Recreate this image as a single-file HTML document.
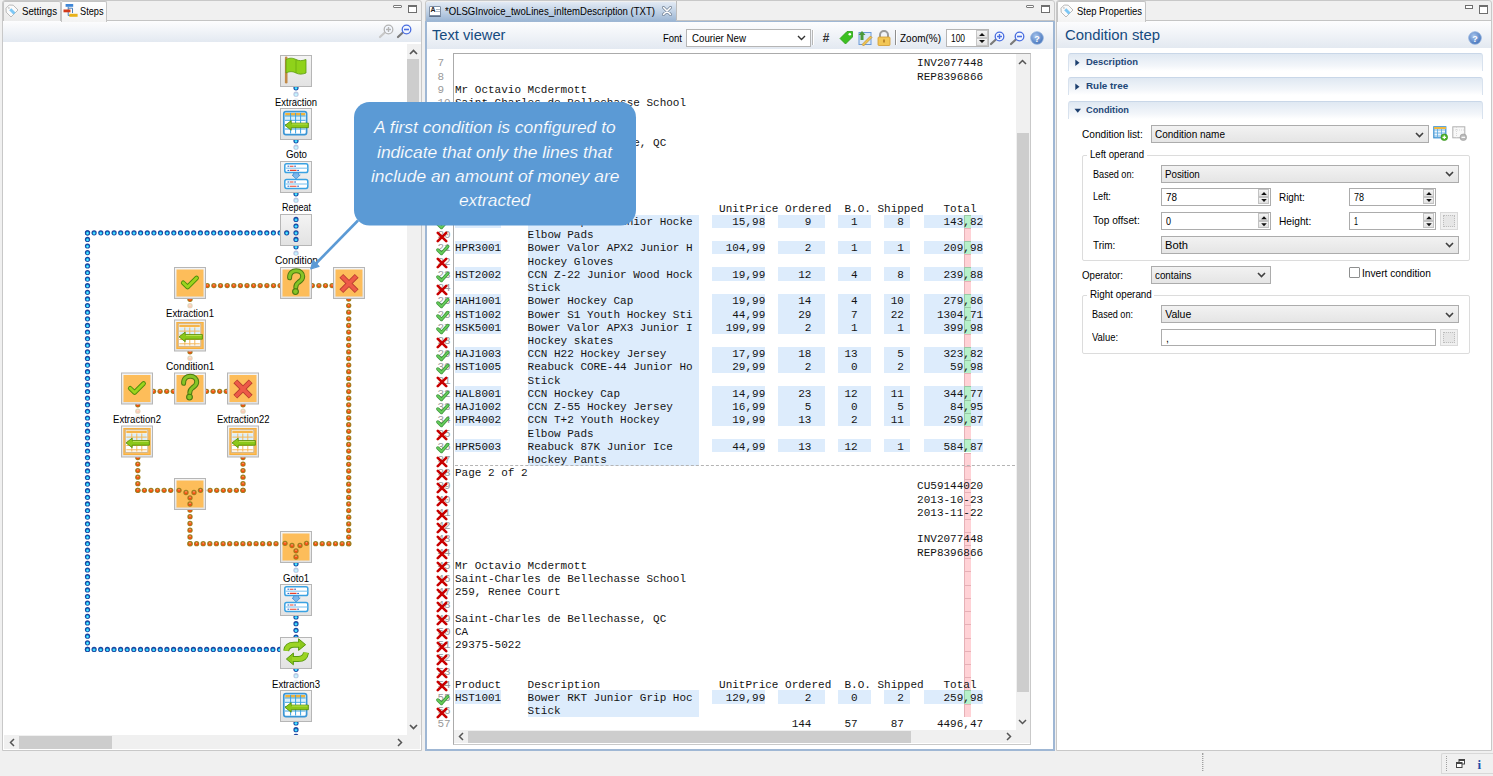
<!DOCTYPE html><html><head><meta charset="utf-8"><title>OLSG</title><style>
*{box-sizing:border-box;margin:0;padding:0}
html,body{width:1493px;height:776px;overflow:hidden;background:#f0f0f0;font-family:"Liberation Sans",sans-serif;font-size:12px;color:#000}
.a{position:absolute}
.tb{background:linear-gradient(#fdfdfe,#e3e9f1)}
.mono{font-family:"Liberation Mono",monospace;font-size:11px;white-space:pre;color:#141414}
</style></head><body>
<div class="a" style="left:2px;top:0;width:420px;height:751px;border:1px solid #c8c8c8;border-radius:3px 3px 0 0;background:#f0f0f0"></div>
<div class="a tb" style="left:3px;top:20px;width:418px;height:22px;border-top:1px solid #c4c4c4"></div>
<div class="a" style="left:3px;top:42px;width:418px;height:708px;background:#fff"></div>
<div class="a" style="left:3px;top:1px;width:58px;height:20px;background:linear-gradient(#f6f6f6,#ebebeb);border:1px solid #c4c4c4;border-bottom:none;border-radius:2px 2px 0 0"></div>
<div class="a" style="left:61px;top:1px;width:46px;height:21px;background:linear-gradient(#ffffff,#f3f3f3);border:1px solid #c4c4c4;border-bottom:none;border-radius:2px 2px 0 0"></div>
<svg class="a" style="left:5px;top:4px" width="14" height="14" viewBox="0 0 14 14"><path d="M1 4.2 L4.2 1 L8.2 1.2 L13 6 L6 13 L1.2 8.2 Z" fill="#fafafa" stroke="#b9b9b9" stroke-width="1"/><path d="M5 5.5 L6.3 4.2 L10.5 8.4 L8.4 10.5 L4.2 6.3Z" fill="#7cc7f5"/><circle cx="3.9" cy="3.9" r="0.9" fill="#c8c8c8"/></svg>
<div class="a" style="left:22.20px;top:5.91px;font-family:'Liberation Sans',sans-serif;font-size:10.50px;line-height:10.50px;color:#000;white-space:pre;transform:scaleX(0.9225);transform-origin:0 0;">Settings</div>
<svg class="a" style="left:63px;top:3px" width="15" height="15" viewBox="0 0 15 15"><rect x="2.6" y="1" width="7.6" height="2.8" fill="#3f86d6"/><path d="M5.2 3.8 V12.5 H9 M5.2 5.2 H9.5 V10" fill="none" stroke="#4d80b8" stroke-width="1"/><rect x="0.5" y="6.5" width="7" height="2.8" fill="#d23a1a"/><rect x="6.3" y="10.8" width="8.3" height="3" fill="#e8b21c"/></svg>
<div class="a" style="left:80.00px;top:5.91px;font-family:'Liberation Sans',sans-serif;font-size:10.50px;line-height:10.50px;color:#000;white-space:pre;transform:scaleX(0.8752);transform-origin:0 0;">Steps</div>
<div class="a" style="left:393.3px;top:5px;width:8.5px;height:3px;border:1px solid #7a7a7a;border-radius:1px;background:#fff"></div><div class="a" style="left:408.1px;top:5px;width:9px;height:8px;border:1px solid #6e6e6e;border-top-width:2px;background:#fff"></div>
<svg class="a" style="left:377.5px;top:23.9px" width="16" height="16" viewBox="0 0 16 16"><path d="M2 13 L6.3 9" stroke="#c8c8c8" stroke-width="2.2" stroke-linecap="round"/><circle cx="10.5" cy="5.5" r="4.3" fill="#f4f8ff" stroke="#b4b4b4" stroke-width="1.3"/><path d="M8 5.5h5M10.5 3v5" stroke="#b4b4b4" stroke-width="1.4"/></svg>
<svg class="a" style="left:396.2px;top:23.9px" width="16" height="16" viewBox="0 0 16 16"><path d="M2 13 L6.3 9" stroke="#7a7a7a" stroke-width="2.2" stroke-linecap="round"/><circle cx="10.5" cy="5.5" r="4.3" fill="#f4f8ff" stroke="#4a6ee0" stroke-width="1.3"/><path d="M8 5.5h5" stroke="#4a6ee0" stroke-width="1.6"/></svg>
<div class="a" style="left:406.5px;top:44px;width:14px;height:691px;background:#f0f0f0"></div>
<div class="a" style="left:407px;top:59px;width:12px;height:160px;background:#cdcdcd"></div>
<svg class="a" style="left:408.5px;top:49px" width="9" height="6" viewBox="0 0 9 6"><path d="M1 5L4.5 1.5L8 5" fill="none" stroke="#555" stroke-width="1.7"/></svg>
<svg class="a" style="left:408.5px;top:724px" width="9" height="6" viewBox="0 0 9 6"><path d="M1 1L4.5 4.5L8 1" fill="none" stroke="#555" stroke-width="1.7"/></svg>
<div class="a" style="left:4px;top:735px;width:416px;height:14px;background:#f0f0f0"></div>
<div class="a" style="left:19px;top:735.5px;width:93px;height:13px;background:#cdcdcd"></div>
<svg class="a" style="left:9px;top:737.5px" width="6" height="9" viewBox="0 0 6 9"><path d="M5 1L1.5 4.5L5 8" fill="none" stroke="#555" stroke-width="1.5"/></svg>
<svg class="a" style="left:397px;top:737.5px" width="6" height="9" viewBox="0 0 6 9"><path d="M1 1L4.5 4.5L1 8" fill="none" stroke="#555" stroke-width="1.5"/></svg>
<svg class="a" style="left:0;top:0" width="407" height="735" viewBox="0 0 407 735"><defs><radialGradient id="bdg" cx="50%" cy="55%" r="50%"><stop offset="0" stop-color="#50eaff"/><stop offset="0.45" stop-color="#1aa8ec"/><stop offset="0.72" stop-color="#1a4aa8"/><stop offset="0.9" stop-color="#183c96"/><stop offset="1" stop-color="#6080c0"/></radialGradient><radialGradient id="odg" cx="50%" cy="55%" r="50%"><stop offset="0" stop-color="#ff7a3a"/><stop offset="0.5" stop-color="#f8460c"/><stop offset="0.68" stop-color="#c85010"/><stop offset="0.82" stop-color="#8a7618"/><stop offset="1" stop-color="#b0a050"/></radialGradient><symbol id="bd" overflow="visible"><circle cx="0" cy="0" r="2.6" fill="#1d449e"/><circle cx="0" cy="0.3" r="1.55" fill="#1fc0f6"/><circle cx="0" cy="0.6" r="0.8" fill="#6af0ff"/></symbol><symbol id="od" overflow="visible"><circle cx="0" cy="0" r="2.65" fill="#9a8222"/><circle cx="0" cy="0.2" r="1.7" fill="#f4500e"/><circle cx="0" cy="-0.6" r="0.8" fill="#ff9a70"/></symbol><clipPath id="dclip"><rect x="3" y="42" width="404" height="693"/></clipPath></defs><g clip-path="url(#dclip)"><use href="#bd" x="296.0" y="87.8"/><use href="#bd" x="296.0" y="94.2" opacity="0.3"/><use href="#bd" x="296.0" y="100.8" opacity="0.1"/><use href="#bd" x="296.0" y="140.8"/><use href="#bd" x="296.0" y="147.2" opacity="0.3"/><use href="#bd" x="296.0" y="153.8" opacity="0.1"/><use href="#bd" x="296.0" y="193.8"/><use href="#bd" x="296.0" y="200.2" opacity="0.3"/><use href="#bd" x="296.0" y="206.8" opacity="0.1"/><use href="#bd" x="296.0" y="246.8"/><use href="#bd" x="296.0" y="253.2" opacity="0.3"/><use href="#bd" x="296.0" y="259.8" opacity="0.1"/><use href="#bd" x="87.5" y="232.8"/><use href="#bd" x="94.1" y="232.8"/><use href="#bd" x="100.8" y="232.8"/><use href="#bd" x="107.4" y="232.8"/><use href="#bd" x="114.1" y="232.8"/><use href="#bd" x="120.7" y="232.8"/><use href="#bd" x="127.3" y="232.8"/><use href="#bd" x="134.0" y="232.8"/><use href="#bd" x="140.6" y="232.8"/><use href="#bd" x="147.3" y="232.8"/><use href="#bd" x="153.9" y="232.8"/><use href="#bd" x="160.5" y="232.8"/><use href="#bd" x="167.2" y="232.8"/><use href="#bd" x="173.8" y="232.8"/><use href="#bd" x="180.5" y="232.8"/><use href="#bd" x="187.1" y="232.8"/><use href="#bd" x="193.7" y="232.8"/><use href="#bd" x="200.4" y="232.8"/><use href="#bd" x="207.0" y="232.8"/><use href="#bd" x="213.7" y="232.8"/><use href="#bd" x="220.3" y="232.8"/><use href="#bd" x="226.9" y="232.8"/><use href="#bd" x="233.6" y="232.8"/><use href="#bd" x="240.2" y="232.8"/><use href="#bd" x="246.9" y="232.8"/><use href="#bd" x="253.5" y="232.8"/><use href="#bd" x="260.1" y="232.8"/><use href="#bd" x="266.8" y="232.8"/><use href="#bd" x="273.4" y="232.8"/><use href="#bd" x="280.1" y="232.8"/><use href="#bd" x="286.7" y="232.8"/><use href="#bd" x="87.5" y="232.8"/><use href="#bd" x="87.5" y="239.4"/><use href="#bd" x="87.5" y="246.0"/><use href="#bd" x="87.5" y="252.6"/><use href="#bd" x="87.5" y="259.3"/><use href="#bd" x="87.5" y="265.9"/><use href="#bd" x="87.5" y="272.5"/><use href="#bd" x="87.5" y="279.1"/><use href="#bd" x="87.5" y="285.7"/><use href="#bd" x="87.5" y="292.3"/><use href="#bd" x="87.5" y="298.9"/><use href="#bd" x="87.5" y="305.5"/><use href="#bd" x="87.5" y="312.2"/><use href="#bd" x="87.5" y="318.8"/><use href="#bd" x="87.5" y="325.4"/><use href="#bd" x="87.5" y="332.0"/><use href="#bd" x="87.5" y="338.6"/><use href="#bd" x="87.5" y="345.2"/><use href="#bd" x="87.5" y="351.8"/><use href="#bd" x="87.5" y="358.4"/><use href="#bd" x="87.5" y="365.1"/><use href="#bd" x="87.5" y="371.7"/><use href="#bd" x="87.5" y="378.3"/><use href="#bd" x="87.5" y="384.9"/><use href="#bd" x="87.5" y="391.5"/><use href="#bd" x="87.5" y="398.1"/><use href="#bd" x="87.5" y="404.7"/><use href="#bd" x="87.5" y="411.3"/><use href="#bd" x="87.5" y="418.0"/><use href="#bd" x="87.5" y="424.6"/><use href="#bd" x="87.5" y="431.2"/><use href="#bd" x="87.5" y="437.8"/><use href="#bd" x="87.5" y="444.4"/><use href="#bd" x="87.5" y="451.0"/><use href="#bd" x="87.5" y="457.6"/><use href="#bd" x="87.5" y="464.2"/><use href="#bd" x="87.5" y="470.9"/><use href="#bd" x="87.5" y="477.5"/><use href="#bd" x="87.5" y="484.1"/><use href="#bd" x="87.5" y="490.7"/><use href="#bd" x="87.5" y="497.3"/><use href="#bd" x="87.5" y="503.9"/><use href="#bd" x="87.5" y="510.5"/><use href="#bd" x="87.5" y="517.1"/><use href="#bd" x="87.5" y="523.8"/><use href="#bd" x="87.5" y="530.4"/><use href="#bd" x="87.5" y="537.0"/><use href="#bd" x="87.5" y="543.6"/><use href="#bd" x="87.5" y="550.2"/><use href="#bd" x="87.5" y="556.8"/><use href="#bd" x="87.5" y="563.4"/><use href="#bd" x="87.5" y="570.0"/><use href="#bd" x="87.5" y="576.7"/><use href="#bd" x="87.5" y="583.3"/><use href="#bd" x="87.5" y="589.9"/><use href="#bd" x="87.5" y="596.5"/><use href="#bd" x="87.5" y="603.1"/><use href="#bd" x="87.5" y="609.7"/><use href="#bd" x="87.5" y="616.3"/><use href="#bd" x="87.5" y="622.9"/><use href="#bd" x="87.5" y="629.6"/><use href="#bd" x="87.5" y="636.2"/><use href="#bd" x="87.5" y="642.8"/><use href="#bd" x="87.5" y="649.4"/><use href="#bd" x="87.5" y="649.4"/><use href="#bd" x="94.1" y="649.4"/><use href="#bd" x="100.7" y="649.4"/><use href="#bd" x="107.4" y="649.4"/><use href="#bd" x="114.0" y="649.4"/><use href="#bd" x="120.6" y="649.4"/><use href="#bd" x="127.2" y="649.4"/><use href="#bd" x="133.8" y="649.4"/><use href="#bd" x="140.5" y="649.4"/><use href="#bd" x="147.1" y="649.4"/><use href="#bd" x="153.7" y="649.4"/><use href="#bd" x="160.3" y="649.4"/><use href="#bd" x="166.9" y="649.4"/><use href="#bd" x="173.6" y="649.4"/><use href="#bd" x="180.2" y="649.4"/><use href="#bd" x="186.8" y="649.4"/><use href="#bd" x="193.4" y="649.4"/><use href="#bd" x="200.1" y="649.4"/><use href="#bd" x="206.7" y="649.4"/><use href="#bd" x="213.3" y="649.4"/><use href="#bd" x="219.9" y="649.4"/><use href="#bd" x="226.5" y="649.4"/><use href="#bd" x="233.2" y="649.4"/><use href="#bd" x="239.8" y="649.4"/><use href="#bd" x="246.4" y="649.4"/><use href="#bd" x="253.0" y="649.4"/><use href="#bd" x="259.6" y="649.4"/><use href="#bd" x="266.3" y="649.4"/><use href="#bd" x="272.9" y="649.4"/><use href="#bd" x="279.5" y="649.4"/><use href="#bd" x="296.0" y="563.8"/><use href="#bd" x="296.0" y="570.2" opacity="0.3"/><use href="#bd" x="296.0" y="576.8" opacity="0.1"/><use href="#bd" x="296.0" y="617.0"/><use href="#bd" x="296.0" y="623.7"/><use href="#bd" x="296.0" y="630.3"/><use href="#bd" x="296.0" y="637.0"/><use href="#bd" x="296.0" y="669.3"/><use href="#bd" x="296.0" y="675.7" opacity="0.3"/><use href="#bd" x="296.0" y="682.3" opacity="0.1"/><use href="#bd" x="296.0" y="723.0"/><use href="#bd" x="296.0" y="729.7"/><use href="#bd" x="296.0" y="736.3"/><use href="#bd" x="296.0" y="743.0"/><use href="#od" x="207.3" y="285.6"/><use href="#od" x="213.9" y="285.6"/><use href="#od" x="220.5" y="285.6"/><use href="#od" x="227.2" y="285.6"/><use href="#od" x="233.8" y="285.6"/><use href="#od" x="240.4" y="285.6"/><use href="#od" x="247.0" y="285.6"/><use href="#od" x="253.6" y="285.6"/><use href="#od" x="260.2" y="285.6"/><use href="#od" x="266.9" y="285.6"/><use href="#od" x="273.5" y="285.6"/><use href="#od" x="280.1" y="285.6"/><use href="#od" x="312.3" y="285.6"/><use href="#od" x="318.9" y="285.6"/><use href="#od" x="325.5" y="285.6"/><use href="#od" x="332.1" y="285.6"/><use href="#od" x="190.0" y="299.3"/><use href="#od" x="190.0" y="305.7" opacity="0.3"/><use href="#od" x="190.0" y="312.3" opacity="0.1"/><use href="#od" x="190.0" y="351.8"/><use href="#od" x="190.0" y="358.2" opacity="0.3"/><use href="#od" x="190.0" y="364.8" opacity="0.1"/><use href="#od" x="153.5" y="391.3"/><use href="#od" x="160.1" y="391.3"/><use href="#od" x="166.7" y="391.3"/><use href="#od" x="173.3" y="391.3"/><use href="#od" x="206.5" y="391.3"/><use href="#od" x="213.1" y="391.3"/><use href="#od" x="219.7" y="391.3"/><use href="#od" x="226.3" y="391.3"/><use href="#od" x="137.8" y="404.8"/><use href="#od" x="137.8" y="411.2" opacity="0.3"/><use href="#od" x="137.8" y="417.8" opacity="0.1"/><use href="#od" x="243.0" y="404.8"/><use href="#od" x="243.0" y="411.2" opacity="0.3"/><use href="#od" x="243.0" y="417.8" opacity="0.1"/><use href="#od" x="137.8" y="457.5"/><use href="#od" x="137.8" y="464.1"/><use href="#od" x="137.8" y="470.6"/><use href="#od" x="137.8" y="477.2"/><use href="#od" x="137.8" y="483.7"/><use href="#od" x="137.8" y="490.3"/><use href="#od" x="243.0" y="457.5"/><use href="#od" x="243.0" y="464.1"/><use href="#od" x="243.0" y="470.6"/><use href="#od" x="243.0" y="477.2"/><use href="#od" x="243.0" y="483.7"/><use href="#od" x="243.0" y="490.3"/><use href="#od" x="137.8" y="490.3"/><use href="#od" x="144.4" y="490.3"/><use href="#od" x="151.0" y="490.3"/><use href="#od" x="157.5" y="490.3"/><use href="#od" x="164.1" y="490.3"/><use href="#od" x="170.7" y="490.3"/><use href="#od" x="177.2" y="490.3"/><use href="#od" x="183.8" y="490.3"/><use href="#od" x="190.4" y="490.3"/><use href="#od" x="197.0" y="490.3"/><use href="#od" x="203.6" y="490.3"/><use href="#od" x="210.1" y="490.3"/><use href="#od" x="216.7" y="490.3"/><use href="#od" x="223.3" y="490.3"/><use href="#od" x="229.8" y="490.3"/><use href="#od" x="236.4" y="490.3"/><use href="#od" x="243.0" y="490.3"/><use href="#od" x="190.0" y="510.0"/><use href="#od" x="190.0" y="516.7"/><use href="#od" x="190.0" y="523.5"/><use href="#od" x="190.0" y="530.2"/><use href="#od" x="190.0" y="537.0"/><use href="#od" x="190.0" y="543.7"/><use href="#od" x="190.0" y="543.7"/><use href="#od" x="196.6" y="543.7"/><use href="#od" x="203.2" y="543.7"/><use href="#od" x="209.8" y="543.7"/><use href="#od" x="216.4" y="543.7"/><use href="#od" x="223.1" y="543.7"/><use href="#od" x="229.7" y="543.7"/><use href="#od" x="236.3" y="543.7"/><use href="#od" x="242.9" y="543.7"/><use href="#od" x="249.5" y="543.7"/><use href="#od" x="256.1" y="543.7"/><use href="#od" x="262.7" y="543.7"/><use href="#od" x="269.4" y="543.7"/><use href="#od" x="276.0" y="543.7"/><use href="#od" x="282.6" y="543.7"/><use href="#od" x="289.2" y="543.7"/><use href="#od" x="295.8" y="543.7"/><use href="#od" x="302.4" y="543.7"/><use href="#od" x="309.0" y="543.7"/><use href="#od" x="315.6" y="543.7"/><use href="#od" x="322.2" y="543.7"/><use href="#od" x="328.9" y="543.7"/><use href="#od" x="335.5" y="543.7"/><use href="#od" x="342.1" y="543.7"/><use href="#od" x="348.7" y="543.7"/><use href="#od" x="348.7" y="299.0"/><use href="#od" x="348.7" y="305.6"/><use href="#od" x="348.7" y="312.2"/><use href="#od" x="348.7" y="318.8"/><use href="#od" x="348.7" y="325.5"/><use href="#od" x="348.7" y="332.1"/><use href="#od" x="348.7" y="338.7"/><use href="#od" x="348.7" y="345.3"/><use href="#od" x="348.7" y="351.9"/><use href="#od" x="348.7" y="358.5"/><use href="#od" x="348.7" y="365.1"/><use href="#od" x="348.7" y="371.7"/><use href="#od" x="348.7" y="378.4"/><use href="#od" x="348.7" y="385.0"/><use href="#od" x="348.7" y="391.6"/><use href="#od" x="348.7" y="398.2"/><use href="#od" x="348.7" y="404.8"/><use href="#od" x="348.7" y="411.4"/><use href="#od" x="348.7" y="418.0"/><use href="#od" x="348.7" y="424.7"/><use href="#od" x="348.7" y="431.3"/><use href="#od" x="348.7" y="437.9"/><use href="#od" x="348.7" y="444.5"/><use href="#od" x="348.7" y="451.1"/><use href="#od" x="348.7" y="457.7"/><use href="#od" x="348.7" y="464.3"/><use href="#od" x="348.7" y="471.0"/><use href="#od" x="348.7" y="477.6"/><use href="#od" x="348.7" y="484.2"/><use href="#od" x="348.7" y="490.8"/><use href="#od" x="348.7" y="497.4"/><use href="#od" x="348.7" y="504.0"/><use href="#od" x="348.7" y="510.6"/><use href="#od" x="348.7" y="517.2"/><use href="#od" x="348.7" y="523.9"/><use href="#od" x="348.7" y="530.5"/><use href="#od" x="348.7" y="537.1"/><use href="#od" x="348.7" y="543.7"/><defs><linearGradient id="gbg" x1="0" y1="0" x2="0" y2="1"><stop offset="0" stop-color="#f4f4f4"/><stop offset="1" stop-color="#e2e2e2"/></linearGradient></defs><rect x="280.5" y="55.5" width="31" height="31" fill="url(#gbg)" stroke="#b6b6b6" stroke-width="1"/><g transform="translate(280.0 55.0)"><path d="M6.2 2.8 V27.3" stroke="#c28a48" stroke-width="2.6" stroke-linecap="round"/><path d="M6 4.5 C10 2.5 13 3 16 4.5 C19 6 22 6 26 4.5 V18 C22 19.5 19 19.5 16 18 C13 16.5 10 16 6 18 Z" fill="#8fd21a" stroke="#5c9a10" stroke-width="0.8"/><path d="M16 4.5 V18" stroke="#6aaa10" stroke-width="0.8"/></g><rect x="280.5" y="108.5" width="31" height="31" fill="url(#gbg)" stroke="#b6b6b6" stroke-width="1"/><g transform="translate(280.0 108.0)"><rect x="3.8" y="3.6" width="22.8" height="23" rx="2.2" fill="#fff" stroke="#3b96d6" stroke-width="1.7"/><rect x="5.2" y="5" width="20" height="2.6" fill="#f2b33a"/><rect x="5.2" y="8.4" width="20" height="3.2" fill="#d8f0fc"/><path d="M5 8H25.5 M5 12.3H25.5 M5 16.6H25.5 M5 21H25.5 M10.6 5V25.5 M15.6 5V25.5 M20.6 5V25.5" stroke="#3aa2e2" stroke-width="1"/><path d="M5 17.4 L11.2 12.6 V15.1 H28.4 V19.7 H11.2 V22.2 Z" fill="#8cc81a" stroke="#4f8a06" stroke-width="0.8" stroke-linejoin="round"/><path d="M12 16 H27.5" stroke="#b8e050" stroke-width="1"/></g><rect x="280.5" y="161.5" width="31" height="31" fill="url(#gbg)" stroke="#b6b6b6" stroke-width="1"/><g transform="translate(280.0 161.0)"><rect x="4.8" y="2.8" width="23" height="8.8" rx="1.8" fill="#fff" stroke="#3aa2e2" stroke-width="1.5"/><path d="M5 7.2H27.5" stroke="#8ccaf0" stroke-width="1.2"/><path d="M7.5 5.2H9.3 M14.2 5.2H16 M7.5 9.4H9.3 M17.2 9.4H19" stroke="#2a5cc0" stroke-width="1"/><path d="M10 5.2H13.5 M10 9.4H16.5" stroke="#e8402a" stroke-width="1.1"/><path d="M13.6 11.8 H18.6 V14 H20.2 L16.1 18 L12 14 H13.6 Z" fill="#7cb8ec" stroke="#3a88d0" stroke-width="0.7"/><rect x="4.8" y="18.6" width="23" height="8.8" rx="1.8" fill="#fff" stroke="#3aa2e2" stroke-width="1.5"/><path d="M5 23H27.5" stroke="#8ccaf0" stroke-width="1.2"/><path d="M7.5 21H9.3 M14.2 21H16 M7.5 25.2H9.3 M17.2 25.2H19" stroke="#2a5cc0" stroke-width="1"/><path d="M10 21H13.5 M10 25.2H16.5" stroke="#e8402a" stroke-width="1.1"/></g><rect x="280.5" y="214.5" width="31" height="31" fill="url(#gbg)" stroke="#b6b6b6" stroke-width="1"/><g transform="translate(280.0 214.0)"><use href="#bd" x="16" y="5.4"/><use href="#bd" x="16" y="12.0"/><use href="#bd" x="16" y="18.8"/><use href="#bd" x="16" y="25.4"/><use href="#bd" x="6.7" y="18.8"/></g><rect x="280.5" y="267.5" width="31" height="31" fill="url(#gbg)" stroke="#b6b6b6" stroke-width="1"/><rect x="282.5" y="269.5" width="27" height="27" fill="#fdbd5a"/><g transform="translate(280.0 267.0)"><path d="M9.6 10.8 C9.4 5.6 12.8 3.8 16.2 3.8 C20.4 3.8 22.7 6.4 22.7 9.4 C22.7 12.6 20.2 14 18.4 15.4 C16.6 16.8 15.8 17.8 15.8 20.2" fill="none" stroke="#4c7a12" stroke-width="5" stroke-linecap="round"/><path d="M9.6 10.8 C9.4 5.6 12.8 3.8 16.2 3.8 C20.4 3.8 22.7 6.4 22.7 9.4 C22.7 12.6 20.2 14 18.4 15.4 C16.6 16.8 15.8 17.8 15.8 20.2" fill="none" stroke="#86c426" stroke-width="3" stroke-linecap="round"/><circle cx="15.5" cy="24.6" r="2.9" fill="#86c426" stroke="#4c7a12" stroke-width="1.1"/></g><rect x="174.5" y="267.5" width="31" height="31" fill="url(#gbg)" stroke="#b6b6b6" stroke-width="1"/><rect x="176.5" y="269.5" width="27" height="27" fill="#fdbd5a"/><g transform="translate(174.0 267.0)"><path d="M9.2 15.8 L13.6 20 L22.6 11" fill="none" stroke="#4e8e0a" stroke-width="4.6" stroke-linejoin="round" stroke-linecap="round"/><path d="M9.2 15.8 L13.6 20 L22.6 11" fill="none" stroke="#9cd41e" stroke-width="2.8" stroke-linejoin="round" stroke-linecap="round"/></g><rect x="333.5" y="267.5" width="31" height="31" fill="url(#gbg)" stroke="#b6b6b6" stroke-width="1"/><rect x="335.5" y="269.5" width="27" height="27" fill="#fdbd5a"/><g transform="translate(333.0 267.0)"><path d="M8.3 8.8 L23.7 24.2 M23.7 8.8 L8.3 24.2" stroke="#b84030" stroke-width="5.4"/><path d="M8.8 9.3 L23.2 23.7 M23.2 9.3 L8.8 23.7" stroke="#ee5a48" stroke-width="3.6"/></g><rect x="174.5" y="320.0" width="31" height="31" fill="url(#gbg)" stroke="#b6b6b6" stroke-width="1"/><rect x="176.5" y="322.0" width="27" height="27" fill="#fdbd5a"/><g transform="translate(174.0 319.5)"><rect x="3" y="3" width="26" height="26" fill="none" stroke="#f6b040" stroke-width="1"/><rect x="4.3" y="4.3" width="22.5" height="22.5" fill="#fff" stroke="#c9b18c" stroke-width="0.9"/><rect x="5.3" y="5.3" width="20.5" height="2.4" fill="#f6b548"/><rect x="5.3" y="8.2" width="20.5" height="7" fill="#d9effb"/><path d="M5.3 11.6H25.8 M5.3 15.6H25.8 M5.3 20H25.8 M5.3 24.3H25.8 M10.8 8V26 M15.8 8V26 M20.8 8V26" stroke="#f6b758" stroke-width="1"/><path d="M5 17.4 L11.2 12.6 V15.1 H28.4 V19.7 H11.2 V22.2 Z" fill="#8cc81a" stroke="#4f8a06" stroke-width="0.8" stroke-linejoin="round"/><path d="M12 16 H27.5" stroke="#b8e050" stroke-width="1"/></g><rect x="174.5" y="373.0" width="31" height="31" fill="url(#gbg)" stroke="#b6b6b6" stroke-width="1"/><rect x="176.5" y="375.0" width="27" height="27" fill="#fdbd5a"/><g transform="translate(174.0 372.5)"><path d="M9.6 10.8 C9.4 5.6 12.8 3.8 16.2 3.8 C20.4 3.8 22.7 6.4 22.7 9.4 C22.7 12.6 20.2 14 18.4 15.4 C16.6 16.8 15.8 17.8 15.8 20.2" fill="none" stroke="#4c7a12" stroke-width="5" stroke-linecap="round"/><path d="M9.6 10.8 C9.4 5.6 12.8 3.8 16.2 3.8 C20.4 3.8 22.7 6.4 22.7 9.4 C22.7 12.6 20.2 14 18.4 15.4 C16.6 16.8 15.8 17.8 15.8 20.2" fill="none" stroke="#86c426" stroke-width="3" stroke-linecap="round"/><circle cx="15.5" cy="24.6" r="2.9" fill="#86c426" stroke="#4c7a12" stroke-width="1.1"/></g><rect x="121.5" y="373.0" width="31" height="31" fill="url(#gbg)" stroke="#b6b6b6" stroke-width="1"/><rect x="123.5" y="375.0" width="27" height="27" fill="#fdbd5a"/><g transform="translate(121.0 372.5)"><path d="M9.2 15.8 L13.6 20 L22.6 11" fill="none" stroke="#4e8e0a" stroke-width="4.6" stroke-linejoin="round" stroke-linecap="round"/><path d="M9.2 15.8 L13.6 20 L22.6 11" fill="none" stroke="#9cd41e" stroke-width="2.8" stroke-linejoin="round" stroke-linecap="round"/></g><rect x="227.5" y="373.0" width="31" height="31" fill="url(#gbg)" stroke="#b6b6b6" stroke-width="1"/><rect x="229.5" y="375.0" width="27" height="27" fill="#fdbd5a"/><g transform="translate(227.0 372.5)"><path d="M8.3 8.8 L23.7 24.2 M23.7 8.8 L8.3 24.2" stroke="#b84030" stroke-width="5.4"/><path d="M8.8 9.3 L23.2 23.7 M23.2 9.3 L8.8 23.7" stroke="#ee5a48" stroke-width="3.6"/></g><rect x="121.5" y="426.0" width="31" height="31" fill="url(#gbg)" stroke="#b6b6b6" stroke-width="1"/><rect x="123.5" y="428.0" width="27" height="27" fill="#fdbd5a"/><g transform="translate(121.0 425.5)"><rect x="3" y="3" width="26" height="26" fill="none" stroke="#f6b040" stroke-width="1"/><rect x="4.3" y="4.3" width="22.5" height="22.5" fill="#fff" stroke="#c9b18c" stroke-width="0.9"/><rect x="5.3" y="5.3" width="20.5" height="2.4" fill="#f6b548"/><rect x="5.3" y="8.2" width="20.5" height="7" fill="#d9effb"/><path d="M5.3 11.6H25.8 M5.3 15.6H25.8 M5.3 20H25.8 M5.3 24.3H25.8 M10.8 8V26 M15.8 8V26 M20.8 8V26" stroke="#f6b758" stroke-width="1"/><path d="M5 17.4 L11.2 12.6 V15.1 H28.4 V19.7 H11.2 V22.2 Z" fill="#8cc81a" stroke="#4f8a06" stroke-width="0.8" stroke-linejoin="round"/><path d="M12 16 H27.5" stroke="#b8e050" stroke-width="1"/></g><rect x="227.5" y="426.0" width="31" height="31" fill="url(#gbg)" stroke="#b6b6b6" stroke-width="1"/><rect x="229.5" y="428.0" width="27" height="27" fill="#fdbd5a"/><g transform="translate(227.0 425.5)"><rect x="3" y="3" width="26" height="26" fill="none" stroke="#f6b040" stroke-width="1"/><rect x="4.3" y="4.3" width="22.5" height="22.5" fill="#fff" stroke="#c9b18c" stroke-width="0.9"/><rect x="5.3" y="5.3" width="20.5" height="2.4" fill="#f6b548"/><rect x="5.3" y="8.2" width="20.5" height="7" fill="#d9effb"/><path d="M5.3 11.6H25.8 M5.3 15.6H25.8 M5.3 20H25.8 M5.3 24.3H25.8 M10.8 8V26 M15.8 8V26 M20.8 8V26" stroke="#f6b758" stroke-width="1"/><path d="M5 17.4 L11.2 12.6 V15.1 H28.4 V19.7 H11.2 V22.2 Z" fill="#8cc81a" stroke="#4f8a06" stroke-width="0.8" stroke-linejoin="round"/><path d="M12 16 H27.5" stroke="#b8e050" stroke-width="1"/></g><rect x="174.5" y="478.5" width="31" height="31" fill="url(#gbg)" stroke="#b6b6b6" stroke-width="1"/><rect x="176.5" y="480.5" width="27" height="27" fill="#fdbd5a"/><g transform="translate(174.0 478.0)"><use href="#od" x="5.0" y="12.3"/><use href="#od" x="12.0" y="14.5"/><use href="#od" x="20.0" y="14.5"/><use href="#od" x="26.5" y="12.3"/><use href="#od" x="16.0" y="19.8"/><use href="#od" x="16.0" y="26.0"/></g><rect x="280.5" y="531.5" width="31" height="31" fill="url(#gbg)" stroke="#b6b6b6" stroke-width="1"/><rect x="282.5" y="533.5" width="27" height="27" fill="#fdbd5a"/><g transform="translate(280.0 531.0)"><use href="#od" x="5.0" y="12.3"/><use href="#od" x="12.0" y="14.5"/><use href="#od" x="20.0" y="14.5"/><use href="#od" x="26.5" y="12.3"/><use href="#od" x="16.0" y="19.8"/><use href="#od" x="16.0" y="26.0"/></g><rect x="280.5" y="584.5" width="31" height="31" fill="url(#gbg)" stroke="#b6b6b6" stroke-width="1"/><g transform="translate(280.0 584.0)"><rect x="4.8" y="2.8" width="23" height="8.8" rx="1.8" fill="#fff" stroke="#3aa2e2" stroke-width="1.5"/><path d="M5 7.2H27.5" stroke="#8ccaf0" stroke-width="1.2"/><path d="M7.5 5.2H9.3 M14.2 5.2H16 M7.5 9.4H9.3 M17.2 9.4H19" stroke="#2a5cc0" stroke-width="1"/><path d="M10 5.2H13.5 M10 9.4H16.5" stroke="#e8402a" stroke-width="1.1"/><path d="M13.6 11.8 H18.6 V14 H20.2 L16.1 18 L12 14 H13.6 Z" fill="#7cb8ec" stroke="#3a88d0" stroke-width="0.7"/><rect x="4.8" y="18.6" width="23" height="8.8" rx="1.8" fill="#fff" stroke="#3aa2e2" stroke-width="1.5"/><path d="M5 23H27.5" stroke="#8ccaf0" stroke-width="1.2"/><path d="M7.5 21H9.3 M14.2 21H16 M7.5 25.2H9.3 M17.2 25.2H19" stroke="#2a5cc0" stroke-width="1"/><path d="M10 21H13.5 M10 25.2H16.5" stroke="#e8402a" stroke-width="1.1"/></g><rect x="280.5" y="637.5" width="31" height="31" fill="url(#gbg)" stroke="#b6b6b6" stroke-width="1"/><g transform="translate(280.0 637.0)"><path d="M6.2 13.8 C6.8 9.5 10 7.7 14 7.7 H19.5" fill="none" stroke="#5a9a10" stroke-width="6"/><path d="M18.6 1.8 L25.6 7.7 L18.6 13.4 Z" fill="#8cc81a" stroke="#5a9a10" stroke-width="1" stroke-linejoin="round"/><path d="M6.2 13.8 C6.8 9.5 10 7.7 14 7.7 H20" fill="none" stroke="#9cd424" stroke-width="4.2"/><path d="M26 15.6 C25.4 20 22.2 22 18.2 22 H12.5" fill="none" stroke="#5a9a10" stroke-width="6"/><path d="M13.4 16 L6.4 22 L13.4 27.8 Z" fill="#8cc81a" stroke="#5a9a10" stroke-width="1" stroke-linejoin="round"/><path d="M26 15.6 C25.4 20 22.2 22 18.2 22 H12" fill="none" stroke="#9cd424" stroke-width="4.2"/></g><rect x="280.5" y="690.5" width="31" height="31" fill="url(#gbg)" stroke="#b6b6b6" stroke-width="1"/><g transform="translate(280.0 690.0)"><rect x="3.8" y="3.6" width="22.8" height="23" rx="2.2" fill="#fff" stroke="#3b96d6" stroke-width="1.7"/><rect x="5.2" y="5" width="20" height="2.6" fill="#f2b33a"/><rect x="5.2" y="8.4" width="20" height="3.2" fill="#d8f0fc"/><path d="M5 8H25.5 M5 12.3H25.5 M5 16.6H25.5 M5 21H25.5 M10.6 5V25.5 M15.6 5V25.5 M20.6 5V25.5" stroke="#3aa2e2" stroke-width="1"/><path d="M5 17.4 L11.2 12.6 V15.1 H28.4 V19.7 H11.2 V22.2 Z" fill="#8cc81a" stroke="#4f8a06" stroke-width="0.8" stroke-linejoin="round"/><path d="M12 16 H27.5" stroke="#b8e050" stroke-width="1"/></g></g></svg>
<div class="a" style="left:275.00px;top:97.31px;font-family:'Liberation Sans',sans-serif;font-size:10.50px;line-height:10.50px;color:#000;white-space:pre;transform:scaleX(0.8996);transform-origin:0 0;">Extraction</div>
<div class="a" style="left:285.50px;top:149.21px;font-family:'Liberation Sans',sans-serif;font-size:10.50px;line-height:10.50px;color:#000;white-space:pre;transform:scaleX(0.9225);transform-origin:0 0;">Goto</div>
<div class="a" style="left:281.50px;top:202.01px;font-family:'Liberation Sans',sans-serif;font-size:10.50px;line-height:10.50px;color:#000;white-space:pre;transform:scaleX(0.8565);transform-origin:0 0;">Repeat</div>
<div class="a" style="left:274.50px;top:255.01px;font-family:'Liberation Sans',sans-serif;font-size:10.50px;line-height:10.50px;color:#000;white-space:pre;transform:scaleX(0.9693);transform-origin:0 0;">Condition</div>
<div class="a" style="left:166.00px;top:308.41px;font-family:'Liberation Sans',sans-serif;font-size:10.50px;line-height:10.50px;color:#000;white-space:pre;transform:scaleX(0.9138);transform-origin:0 0;">Extraction1</div>
<div class="a" style="left:165.80px;top:360.91px;font-family:'Liberation Sans',sans-serif;font-size:10.50px;line-height:10.50px;color:#000;white-space:pre;transform:scaleX(0.9641);transform-origin:0 0;">Condition1</div>
<div class="a" style="left:113.00px;top:413.51px;font-family:'Liberation Sans',sans-serif;font-size:10.50px;line-height:10.50px;color:#000;white-space:pre;transform:scaleX(0.9138);transform-origin:0 0;">Extraction2</div>
<div class="a" style="left:216.70px;top:413.51px;font-family:'Liberation Sans',sans-serif;font-size:10.50px;line-height:10.50px;color:#000;white-space:pre;transform:scaleX(0.9012);transform-origin:0 0;">Extraction22</div>
<div class="a" style="left:283.00px;top:572.61px;font-family:'Liberation Sans',sans-serif;font-size:10.50px;line-height:10.50px;color:#000;white-space:pre;transform:scaleX(0.9090);transform-origin:0 0;">Goto1</div>
<div class="a" style="left:272.00px;top:678.61px;font-family:'Liberation Sans',sans-serif;font-size:10.50px;line-height:10.50px;color:#000;white-space:pre;transform:scaleX(0.9138);transform-origin:0 0;">Extraction3</div>
<div class="a" style="left:425px;top:0;width:630px;height:751px;border:1px solid #c8c8c8;border-radius:3px 3px 0 0;background:#f0f0f0"></div>
<div class="a" style="left:425px;top:21px;width:630px;height:730px;border:2px solid #9fb7d4;border-top:1px solid #9fb7d4;background:#fff"></div>
<div class="a tb" style="left:427px;top:22px;width:626px;height:26.5px"></div>
<div class="a" style="left:453px;top:53px;width:578px;height:692px;border:1px solid #ababab;border-right-color:#c9c9c9;border-bottom-color:#c9c9c9;background:#fff"></div>
<div class="a" style="left:455.00px;top:214.54px;width:46.20px;height:13.22px;background:#ddecfc"></div><div class="a" style="left:712.40px;top:214.54px;width:52.80px;height:13.22px;background:#ddecfc"></div><div class="a" style="left:778.40px;top:214.54px;width:46.20px;height:13.22px;background:#ddecfc"></div><div class="a" style="left:837.80px;top:214.54px;width:33.00px;height:13.22px;background:#ddecfc"></div><div class="a" style="left:884.00px;top:214.54px;width:26.40px;height:13.22px;background:#ddecfc"></div><div class="a" style="left:923.60px;top:214.54px;width:59.40px;height:13.22px;background:#ddecfc"></div><div class="a" style="left:455.00px;top:240.98px;width:46.20px;height:13.22px;background:#ddecfc"></div><div class="a" style="left:712.40px;top:240.98px;width:52.80px;height:13.22px;background:#ddecfc"></div><div class="a" style="left:778.40px;top:240.98px;width:46.20px;height:13.22px;background:#ddecfc"></div><div class="a" style="left:837.80px;top:240.98px;width:33.00px;height:13.22px;background:#ddecfc"></div><div class="a" style="left:884.00px;top:240.98px;width:26.40px;height:13.22px;background:#ddecfc"></div><div class="a" style="left:923.60px;top:240.98px;width:59.40px;height:13.22px;background:#ddecfc"></div><div class="a" style="left:455.00px;top:267.42px;width:46.20px;height:13.22px;background:#ddecfc"></div><div class="a" style="left:712.40px;top:267.42px;width:52.80px;height:13.22px;background:#ddecfc"></div><div class="a" style="left:778.40px;top:267.42px;width:46.20px;height:13.22px;background:#ddecfc"></div><div class="a" style="left:837.80px;top:267.42px;width:33.00px;height:13.22px;background:#ddecfc"></div><div class="a" style="left:884.00px;top:267.42px;width:26.40px;height:13.22px;background:#ddecfc"></div><div class="a" style="left:923.60px;top:267.42px;width:59.40px;height:13.22px;background:#ddecfc"></div><div class="a" style="left:455.00px;top:293.86px;width:46.20px;height:13.22px;background:#ddecfc"></div><div class="a" style="left:712.40px;top:293.86px;width:52.80px;height:13.22px;background:#ddecfc"></div><div class="a" style="left:778.40px;top:293.86px;width:46.20px;height:13.22px;background:#ddecfc"></div><div class="a" style="left:837.80px;top:293.86px;width:33.00px;height:13.22px;background:#ddecfc"></div><div class="a" style="left:884.00px;top:293.86px;width:26.40px;height:13.22px;background:#ddecfc"></div><div class="a" style="left:923.60px;top:293.86px;width:59.40px;height:13.22px;background:#ddecfc"></div><div class="a" style="left:455.00px;top:307.08px;width:46.20px;height:13.22px;background:#ddecfc"></div><div class="a" style="left:712.40px;top:307.08px;width:52.80px;height:13.22px;background:#ddecfc"></div><div class="a" style="left:778.40px;top:307.08px;width:46.20px;height:13.22px;background:#ddecfc"></div><div class="a" style="left:837.80px;top:307.08px;width:33.00px;height:13.22px;background:#ddecfc"></div><div class="a" style="left:884.00px;top:307.08px;width:26.40px;height:13.22px;background:#ddecfc"></div><div class="a" style="left:923.60px;top:307.08px;width:59.40px;height:13.22px;background:#ddecfc"></div><div class="a" style="left:455.00px;top:320.30px;width:46.20px;height:13.22px;background:#ddecfc"></div><div class="a" style="left:712.40px;top:320.30px;width:52.80px;height:13.22px;background:#ddecfc"></div><div class="a" style="left:778.40px;top:320.30px;width:46.20px;height:13.22px;background:#ddecfc"></div><div class="a" style="left:837.80px;top:320.30px;width:33.00px;height:13.22px;background:#ddecfc"></div><div class="a" style="left:884.00px;top:320.30px;width:26.40px;height:13.22px;background:#ddecfc"></div><div class="a" style="left:923.60px;top:320.30px;width:59.40px;height:13.22px;background:#ddecfc"></div><div class="a" style="left:455.00px;top:346.74px;width:46.20px;height:13.22px;background:#ddecfc"></div><div class="a" style="left:712.40px;top:346.74px;width:52.80px;height:13.22px;background:#ddecfc"></div><div class="a" style="left:778.40px;top:346.74px;width:46.20px;height:13.22px;background:#ddecfc"></div><div class="a" style="left:837.80px;top:346.74px;width:33.00px;height:13.22px;background:#ddecfc"></div><div class="a" style="left:884.00px;top:346.74px;width:26.40px;height:13.22px;background:#ddecfc"></div><div class="a" style="left:923.60px;top:346.74px;width:59.40px;height:13.22px;background:#ddecfc"></div><div class="a" style="left:455.00px;top:359.96px;width:46.20px;height:13.22px;background:#ddecfc"></div><div class="a" style="left:712.40px;top:359.96px;width:52.80px;height:13.22px;background:#ddecfc"></div><div class="a" style="left:778.40px;top:359.96px;width:46.20px;height:13.22px;background:#ddecfc"></div><div class="a" style="left:837.80px;top:359.96px;width:33.00px;height:13.22px;background:#ddecfc"></div><div class="a" style="left:884.00px;top:359.96px;width:26.40px;height:13.22px;background:#ddecfc"></div><div class="a" style="left:923.60px;top:359.96px;width:59.40px;height:13.22px;background:#ddecfc"></div><div class="a" style="left:455.00px;top:386.40px;width:46.20px;height:13.22px;background:#ddecfc"></div><div class="a" style="left:712.40px;top:386.40px;width:52.80px;height:13.22px;background:#ddecfc"></div><div class="a" style="left:778.40px;top:386.40px;width:46.20px;height:13.22px;background:#ddecfc"></div><div class="a" style="left:837.80px;top:386.40px;width:33.00px;height:13.22px;background:#ddecfc"></div><div class="a" style="left:884.00px;top:386.40px;width:26.40px;height:13.22px;background:#ddecfc"></div><div class="a" style="left:923.60px;top:386.40px;width:59.40px;height:13.22px;background:#ddecfc"></div><div class="a" style="left:455.00px;top:399.62px;width:46.20px;height:13.22px;background:#ddecfc"></div><div class="a" style="left:712.40px;top:399.62px;width:52.80px;height:13.22px;background:#ddecfc"></div><div class="a" style="left:778.40px;top:399.62px;width:46.20px;height:13.22px;background:#ddecfc"></div><div class="a" style="left:837.80px;top:399.62px;width:33.00px;height:13.22px;background:#ddecfc"></div><div class="a" style="left:884.00px;top:399.62px;width:26.40px;height:13.22px;background:#ddecfc"></div><div class="a" style="left:923.60px;top:399.62px;width:59.40px;height:13.22px;background:#ddecfc"></div><div class="a" style="left:455.00px;top:412.84px;width:46.20px;height:13.22px;background:#ddecfc"></div><div class="a" style="left:712.40px;top:412.84px;width:52.80px;height:13.22px;background:#ddecfc"></div><div class="a" style="left:778.40px;top:412.84px;width:46.20px;height:13.22px;background:#ddecfc"></div><div class="a" style="left:837.80px;top:412.84px;width:33.00px;height:13.22px;background:#ddecfc"></div><div class="a" style="left:884.00px;top:412.84px;width:26.40px;height:13.22px;background:#ddecfc"></div><div class="a" style="left:923.60px;top:412.84px;width:59.40px;height:13.22px;background:#ddecfc"></div><div class="a" style="left:455.00px;top:439.28px;width:46.20px;height:13.22px;background:#ddecfc"></div><div class="a" style="left:712.40px;top:439.28px;width:52.80px;height:13.22px;background:#ddecfc"></div><div class="a" style="left:778.40px;top:439.28px;width:46.20px;height:13.22px;background:#ddecfc"></div><div class="a" style="left:837.80px;top:439.28px;width:33.00px;height:13.22px;background:#ddecfc"></div><div class="a" style="left:884.00px;top:439.28px;width:26.40px;height:13.22px;background:#ddecfc"></div><div class="a" style="left:923.60px;top:439.28px;width:59.40px;height:13.22px;background:#ddecfc"></div><div class="a" style="left:455.00px;top:690.46px;width:46.20px;height:13.22px;background:#ddecfc"></div><div class="a" style="left:712.40px;top:690.46px;width:52.80px;height:13.22px;background:#ddecfc"></div><div class="a" style="left:778.40px;top:690.46px;width:46.20px;height:13.22px;background:#ddecfc"></div><div class="a" style="left:837.80px;top:690.46px;width:33.00px;height:13.22px;background:#ddecfc"></div><div class="a" style="left:884.00px;top:690.46px;width:26.40px;height:13.22px;background:#ddecfc"></div><div class="a" style="left:923.60px;top:690.46px;width:59.40px;height:13.22px;background:#ddecfc"></div><div class="a" style="left:527.60px;top:214.54px;width:171.60px;height:251.18px;background:#ddecfc"></div><div class="a" style="left:527.60px;top:690.46px;width:171.60px;height:26.44px;background:#ddecfc"></div>
<div class="a" style="left:964.20px;top:214.54px;width:6.60px;height:13.22px;background:#b6f0c9;border-left:1px solid #98c8a6;border-top:1px solid #98c8a6"></div><div class="a" style="left:964.20px;top:227.76px;width:6.60px;height:13.22px;background:#ffd2d6;border-left:1px solid #e6b0b6;border-top:1px solid #e6b0b6"></div><div class="a" style="left:964.20px;top:240.98px;width:6.60px;height:13.22px;background:#b6f0c9;border-left:1px solid #98c8a6;border-top:1px solid #98c8a6"></div><div class="a" style="left:964.20px;top:254.20px;width:6.60px;height:13.22px;background:#ffd2d6;border-left:1px solid #e6b0b6;border-top:1px solid #e6b0b6"></div><div class="a" style="left:964.20px;top:267.42px;width:6.60px;height:13.22px;background:#b6f0c9;border-left:1px solid #98c8a6;border-top:1px solid #98c8a6"></div><div class="a" style="left:964.20px;top:280.64px;width:6.60px;height:13.22px;background:#ffd2d6;border-left:1px solid #e6b0b6;border-top:1px solid #e6b0b6"></div><div class="a" style="left:964.20px;top:293.86px;width:6.60px;height:13.22px;background:#b6f0c9;border-left:1px solid #98c8a6;border-top:1px solid #98c8a6"></div><div class="a" style="left:964.20px;top:307.08px;width:6.60px;height:13.22px;background:#b6f0c9;border-left:1px solid #98c8a6;border-top:1px solid #98c8a6"></div><div class="a" style="left:964.20px;top:320.30px;width:6.60px;height:13.22px;background:#b6f0c9;border-left:1px solid #98c8a6;border-top:1px solid #98c8a6"></div><div class="a" style="left:964.20px;top:333.52px;width:6.60px;height:13.22px;background:#ffd2d6;border-left:1px solid #e6b0b6;border-top:1px solid #e6b0b6"></div><div class="a" style="left:964.20px;top:346.74px;width:6.60px;height:13.22px;background:#b6f0c9;border-left:1px solid #98c8a6;border-top:1px solid #98c8a6"></div><div class="a" style="left:964.20px;top:359.96px;width:6.60px;height:13.22px;background:#b6f0c9;border-left:1px solid #98c8a6;border-top:1px solid #98c8a6"></div><div class="a" style="left:964.20px;top:373.18px;width:6.60px;height:13.22px;background:#ffd2d6;border-left:1px solid #e6b0b6;border-top:1px solid #e6b0b6"></div><div class="a" style="left:964.20px;top:386.40px;width:6.60px;height:13.22px;background:#b6f0c9;border-left:1px solid #98c8a6;border-top:1px solid #98c8a6"></div><div class="a" style="left:964.20px;top:399.62px;width:6.60px;height:13.22px;background:#b6f0c9;border-left:1px solid #98c8a6;border-top:1px solid #98c8a6"></div><div class="a" style="left:964.20px;top:412.84px;width:6.60px;height:13.22px;background:#b6f0c9;border-left:1px solid #98c8a6;border-top:1px solid #98c8a6"></div><div class="a" style="left:964.20px;top:426.06px;width:6.60px;height:13.22px;background:#ffd2d6;border-left:1px solid #e6b0b6;border-top:1px solid #e6b0b6"></div><div class="a" style="left:964.20px;top:439.28px;width:6.60px;height:13.22px;background:#b6f0c9;border-left:1px solid #98c8a6;border-top:1px solid #98c8a6"></div><div class="a" style="left:964.20px;top:452.50px;width:6.60px;height:13.22px;background:#ffd2d6;border-left:1px solid #e6b0b6;border-top:1px solid #e6b0b6"></div><div class="a" style="left:964.20px;top:465.72px;width:6.60px;height:13.22px;background:#ffd2d6;border-left:1px solid #e6b0b6;border-top:1px solid #e6b0b6"></div><div class="a" style="left:964.20px;top:478.94px;width:6.60px;height:13.22px;background:#ffd2d6;border-left:1px solid #e6b0b6;border-top:1px solid #e6b0b6"></div><div class="a" style="left:964.20px;top:492.16px;width:6.60px;height:13.22px;background:#ffd2d6;border-left:1px solid #e6b0b6;border-top:1px solid #e6b0b6"></div><div class="a" style="left:964.20px;top:505.38px;width:6.60px;height:13.22px;background:#ffd2d6;border-left:1px solid #e6b0b6;border-top:1px solid #e6b0b6"></div><div class="a" style="left:964.20px;top:518.60px;width:6.60px;height:13.22px;background:#ffd2d6;border-left:1px solid #e6b0b6;border-top:1px solid #e6b0b6"></div><div class="a" style="left:964.20px;top:531.82px;width:6.60px;height:13.22px;background:#ffd2d6;border-left:1px solid #e6b0b6;border-top:1px solid #e6b0b6"></div><div class="a" style="left:964.20px;top:545.04px;width:6.60px;height:13.22px;background:#ffd2d6;border-left:1px solid #e6b0b6;border-top:1px solid #e6b0b6"></div><div class="a" style="left:964.20px;top:558.26px;width:6.60px;height:13.22px;background:#ffd2d6;border-left:1px solid #e6b0b6;border-top:1px solid #e6b0b6"></div><div class="a" style="left:964.20px;top:571.48px;width:6.60px;height:13.22px;background:#ffd2d6;border-left:1px solid #e6b0b6;border-top:1px solid #e6b0b6"></div><div class="a" style="left:964.20px;top:584.70px;width:6.60px;height:13.22px;background:#ffd2d6;border-left:1px solid #e6b0b6;border-top:1px solid #e6b0b6"></div><div class="a" style="left:964.20px;top:597.92px;width:6.60px;height:13.22px;background:#ffd2d6;border-left:1px solid #e6b0b6;border-top:1px solid #e6b0b6"></div><div class="a" style="left:964.20px;top:611.14px;width:6.60px;height:13.22px;background:#ffd2d6;border-left:1px solid #e6b0b6;border-top:1px solid #e6b0b6"></div><div class="a" style="left:964.20px;top:624.36px;width:6.60px;height:13.22px;background:#ffd2d6;border-left:1px solid #e6b0b6;border-top:1px solid #e6b0b6"></div><div class="a" style="left:964.20px;top:637.58px;width:6.60px;height:13.22px;background:#ffd2d6;border-left:1px solid #e6b0b6;border-top:1px solid #e6b0b6"></div><div class="a" style="left:964.20px;top:650.80px;width:6.60px;height:13.22px;background:#ffd2d6;border-left:1px solid #e6b0b6;border-top:1px solid #e6b0b6"></div><div class="a" style="left:964.20px;top:664.02px;width:6.60px;height:13.22px;background:#ffd2d6;border-left:1px solid #e6b0b6;border-top:1px solid #e6b0b6"></div><div class="a" style="left:964.20px;top:677.24px;width:6.60px;height:13.22px;background:#ffd2d6;border-left:1px solid #e6b0b6;border-top:1px solid #e6b0b6"></div><div class="a" style="left:964.20px;top:690.46px;width:6.60px;height:13.22px;background:#b6f0c9;border-left:1px solid #98c8a6;border-top:1px solid #98c8a6"></div><div class="a" style="left:964.20px;top:703.68px;width:6.60px;height:13.22px;background:#ffd2d6;border-left:1px solid #e6b0b6;border-top:1px solid #e6b0b6"></div>
<div class="a" style="left:455px;top:465.22px;width:560px;height:0;border-top:1px dashed #b4b4b4"></div>
<div class="a mono" style="left:455.00px;top:57.40px;line-height:13.22px">                                                                      INV2077448</div><div class="a mono" style="left:455.00px;top:70.62px;line-height:13.22px">                                                                      REP8396866</div><div class="a mono" style="left:455.00px;top:83.84px;line-height:13.22px">Mr Octavio Mcdermott</div><div class="a mono" style="left:455.00px;top:97.06px;line-height:13.22px">Saint-Charles de Bellechasse School</div><div class="a mono" style="left:455.00px;top:110.28px;line-height:13.22px">259, Renee Court</div><div class="a mono" style="left:455.00px;top:123.50px;line-height:13.22px"></div><div class="a mono" style="left:455.00px;top:136.72px;line-height:13.22px">Saint-Charles de Bellechasse, QC</div><div class="a mono" style="left:455.00px;top:149.94px;line-height:13.22px">CA</div><div class="a mono" style="left:455.00px;top:163.16px;line-height:13.22px">29375-5022</div><div class="a mono" style="left:455.00px;top:176.38px;line-height:13.22px"></div><div class="a mono" style="left:455.00px;top:189.60px;line-height:13.22px"></div><div class="a mono" style="left:455.00px;top:202.82px;line-height:13.22px">Product    Description                  UnitPrice Ordered  B.O. Shipped   Total</div><div class="a mono" style="left:455.00px;top:216.04px;line-height:13.22px">HSK6001    CCN Jetspeed Junior Hocke      15,98      9      1      8      143,82</div><div class="a mono" style="left:455.00px;top:229.26px;line-height:13.22px">           Elbow Pads</div><div class="a mono" style="left:455.00px;top:242.48px;line-height:13.22px">HPR3001    Bower Valor APX2 Junior H     104,99      2      1      1      209,98</div><div class="a mono" style="left:455.00px;top:255.70px;line-height:13.22px">           Hockey Gloves</div><div class="a mono" style="left:455.00px;top:268.92px;line-height:13.22px">HST2002    CCN Z-22 Junior Wood Hock      19,99     12      4      8      239,88</div><div class="a mono" style="left:455.00px;top:282.14px;line-height:13.22px">           Stick</div><div class="a mono" style="left:455.00px;top:295.36px;line-height:13.22px">HAH1001    Bower Hockey Cap               19,99     14      4     10      279,86</div><div class="a mono" style="left:455.00px;top:308.58px;line-height:13.22px">HST1002    Bower S1 Youth Hockey Sti      44,99     29      7     22     1304,71</div><div class="a mono" style="left:455.00px;top:321.80px;line-height:13.22px">HSK5001    Bower Valor APX3 Junior I     199,99      2      1      1      399,98</div><div class="a mono" style="left:455.00px;top:335.02px;line-height:13.22px">           Hockey skates</div><div class="a mono" style="left:455.00px;top:348.24px;line-height:13.22px">HAJ1003    CCN H22 Hockey Jersey          17,99     18     13      5      323,82</div><div class="a mono" style="left:455.00px;top:361.46px;line-height:13.22px">HST1005    Reabuck CORE-44 Junior Ho      29,99      2      0      2       59,98</div><div class="a mono" style="left:455.00px;top:374.68px;line-height:13.22px">           Stick</div><div class="a mono" style="left:455.00px;top:387.90px;line-height:13.22px">HAL8001    CCN Hockey Cap                 14,99     23     12     11      344,77</div><div class="a mono" style="left:455.00px;top:401.12px;line-height:13.22px">HAJ1002    CCN Z-55 Hockey Jersey         16,99      5      0      5       84,95</div><div class="a mono" style="left:455.00px;top:414.34px;line-height:13.22px">HPR4002    CCN T+2 Youth Hockey           19,99     13      2     11      259,87</div><div class="a mono" style="left:455.00px;top:427.56px;line-height:13.22px">           Elbow Pads</div><div class="a mono" style="left:455.00px;top:440.78px;line-height:13.22px">HPR5003    Reabuck 87K Junior Ice         44,99     13     12      1      584,87</div><div class="a mono" style="left:455.00px;top:454.00px;line-height:13.22px">           Hockey Pants</div><div class="a mono" style="left:455.00px;top:467.22px;line-height:13.22px">Page 2 of 2</div><div class="a mono" style="left:455.00px;top:480.44px;line-height:13.22px">                                                                      CU59144020</div><div class="a mono" style="left:455.00px;top:493.66px;line-height:13.22px">                                                                      2013-10-23</div><div class="a mono" style="left:455.00px;top:506.88px;line-height:13.22px">                                                                      2013-11-22</div><div class="a mono" style="left:455.00px;top:520.10px;line-height:13.22px"></div><div class="a mono" style="left:455.00px;top:533.32px;line-height:13.22px">                                                                      INV2077448</div><div class="a mono" style="left:455.00px;top:546.54px;line-height:13.22px">                                                                      REP8396866</div><div class="a mono" style="left:455.00px;top:559.76px;line-height:13.22px">Mr Octavio Mcdermott</div><div class="a mono" style="left:455.00px;top:572.98px;line-height:13.22px">Saint-Charles de Bellechasse School</div><div class="a mono" style="left:455.00px;top:586.20px;line-height:13.22px">259, Renee Court</div><div class="a mono" style="left:455.00px;top:599.42px;line-height:13.22px"></div><div class="a mono" style="left:455.00px;top:612.64px;line-height:13.22px">Saint-Charles de Bellechasse, QC</div><div class="a mono" style="left:455.00px;top:625.86px;line-height:13.22px">CA</div><div class="a mono" style="left:455.00px;top:639.08px;line-height:13.22px">29375-5022</div><div class="a mono" style="left:455.00px;top:652.30px;line-height:13.22px"></div><div class="a mono" style="left:455.00px;top:665.52px;line-height:13.22px"></div><div class="a mono" style="left:455.00px;top:678.74px;line-height:13.22px">Product    Description                  UnitPrice Ordered  B.O. Shipped   Total</div><div class="a mono" style="left:455.00px;top:691.96px;line-height:13.22px">HST1001    Bower RKT Junior Grip Hoc     129,99      2      0      2      259,98</div><div class="a mono" style="left:455.00px;top:705.18px;line-height:13.22px">           Stick</div><div class="a mono" style="left:455.00px;top:718.40px;line-height:13.22px">                                                   144     57     87     4496,47</div>
<div class="a mono" style="left:437.5px;top:57.40px;line-height:13.22px;color:#9a9a9a">7</div><div class="a mono" style="left:437.5px;top:70.62px;line-height:13.22px;color:#9a9a9a">8</div><div class="a mono" style="left:437.5px;top:83.84px;line-height:13.22px;color:#9a9a9a">9</div><div class="a mono" style="left:437.5px;top:97.06px;line-height:13.22px;color:#9a9a9a">10</div><div class="a mono" style="left:437.5px;top:110.28px;line-height:13.22px;color:#9a9a9a">11</div><div class="a mono" style="left:437.5px;top:123.50px;line-height:13.22px;color:#9a9a9a">12</div><div class="a mono" style="left:437.5px;top:136.72px;line-height:13.22px;color:#9a9a9a">13</div><div class="a mono" style="left:437.5px;top:149.94px;line-height:13.22px;color:#9a9a9a">14</div><div class="a mono" style="left:437.5px;top:163.16px;line-height:13.22px;color:#9a9a9a">15</div><div class="a mono" style="left:437.5px;top:176.38px;line-height:13.22px;color:#9a9a9a">16</div><div class="a mono" style="left:437.5px;top:189.60px;line-height:13.22px;color:#9a9a9a">17</div><div class="a mono" style="left:437.5px;top:202.82px;line-height:13.22px;color:#9a9a9a">18</div><div class="a mono" style="left:437.5px;top:216.04px;line-height:13.22px;color:#9a9a9a">19</div><div class="a mono" style="left:437.5px;top:229.26px;line-height:13.22px;color:#9a9a9a">20</div><div class="a mono" style="left:437.5px;top:242.48px;line-height:13.22px;color:#9a9a9a">21</div><div class="a mono" style="left:437.5px;top:255.70px;line-height:13.22px;color:#9a9a9a">22</div><div class="a mono" style="left:437.5px;top:268.92px;line-height:13.22px;color:#9a9a9a">23</div><div class="a mono" style="left:437.5px;top:282.14px;line-height:13.22px;color:#9a9a9a">24</div><div class="a mono" style="left:437.5px;top:295.36px;line-height:13.22px;color:#9a9a9a">25</div><div class="a mono" style="left:437.5px;top:308.58px;line-height:13.22px;color:#9a9a9a">26</div><div class="a mono" style="left:437.5px;top:321.80px;line-height:13.22px;color:#9a9a9a">27</div><div class="a mono" style="left:437.5px;top:335.02px;line-height:13.22px;color:#9a9a9a">28</div><div class="a mono" style="left:437.5px;top:348.24px;line-height:13.22px;color:#9a9a9a">29</div><div class="a mono" style="left:437.5px;top:361.46px;line-height:13.22px;color:#9a9a9a">30</div><div class="a mono" style="left:437.5px;top:374.68px;line-height:13.22px;color:#9a9a9a">31</div><div class="a mono" style="left:437.5px;top:387.90px;line-height:13.22px;color:#9a9a9a">32</div><div class="a mono" style="left:437.5px;top:401.12px;line-height:13.22px;color:#9a9a9a">33</div><div class="a mono" style="left:437.5px;top:414.34px;line-height:13.22px;color:#9a9a9a">34</div><div class="a mono" style="left:437.5px;top:427.56px;line-height:13.22px;color:#9a9a9a">35</div><div class="a mono" style="left:437.5px;top:440.78px;line-height:13.22px;color:#9a9a9a">36</div><div class="a mono" style="left:437.5px;top:454.00px;line-height:13.22px;color:#9a9a9a">37</div><div class="a mono" style="left:437.5px;top:467.22px;line-height:13.22px;color:#9a9a9a">38</div><div class="a mono" style="left:437.5px;top:480.44px;line-height:13.22px;color:#9a9a9a">39</div><div class="a mono" style="left:437.5px;top:493.66px;line-height:13.22px;color:#9a9a9a">40</div><div class="a mono" style="left:437.5px;top:506.88px;line-height:13.22px;color:#9a9a9a">41</div><div class="a mono" style="left:437.5px;top:520.10px;line-height:13.22px;color:#9a9a9a">42</div><div class="a mono" style="left:437.5px;top:533.32px;line-height:13.22px;color:#9a9a9a">43</div><div class="a mono" style="left:437.5px;top:546.54px;line-height:13.22px;color:#9a9a9a">44</div><div class="a mono" style="left:437.5px;top:559.76px;line-height:13.22px;color:#9a9a9a">45</div><div class="a mono" style="left:437.5px;top:572.98px;line-height:13.22px;color:#9a9a9a">46</div><div class="a mono" style="left:437.5px;top:586.20px;line-height:13.22px;color:#9a9a9a">47</div><div class="a mono" style="left:437.5px;top:599.42px;line-height:13.22px;color:#9a9a9a">48</div><div class="a mono" style="left:437.5px;top:612.64px;line-height:13.22px;color:#9a9a9a">49</div><div class="a mono" style="left:437.5px;top:625.86px;line-height:13.22px;color:#9a9a9a">50</div><div class="a mono" style="left:437.5px;top:639.08px;line-height:13.22px;color:#9a9a9a">51</div><div class="a mono" style="left:437.5px;top:652.30px;line-height:13.22px;color:#9a9a9a">52</div><div class="a mono" style="left:437.5px;top:665.52px;line-height:13.22px;color:#9a9a9a">53</div><div class="a mono" style="left:437.5px;top:678.74px;line-height:13.22px;color:#9a9a9a">54</div><div class="a mono" style="left:437.5px;top:691.96px;line-height:13.22px;color:#9a9a9a">55</div><div class="a mono" style="left:437.5px;top:705.18px;line-height:13.22px;color:#9a9a9a">56</div><div class="a mono" style="left:437.5px;top:718.40px;line-height:13.22px;color:#9a9a9a">57</div>
<svg class="a" style="left:435.5px;top:217.7px" width="14" height="12" viewBox="0 0 14 12"><path d="M1.9 6 L5.5 9.5 L11.8 2.4" fill="none" stroke="#3a923a" stroke-width="3.3" stroke-linecap="round" stroke-linejoin="round"/><path d="M1.9 6 L5.5 9.5 L11.8 2.4" fill="none" stroke="#66cc5a" stroke-width="1.8" stroke-linecap="round" stroke-linejoin="round"/></svg><svg class="a" style="left:436.3px;top:230.9px" width="12" height="12" viewBox="0 0 12 12"><path d="M1.8 1.8 L10.2 10.2 M10.2 1.8 L1.8 10.2" fill="none" stroke="#c80000" stroke-width="2.6" stroke-linecap="round"/></svg><svg class="a" style="left:435.5px;top:244.1px" width="14" height="12" viewBox="0 0 14 12"><path d="M1.9 6 L5.5 9.5 L11.8 2.4" fill="none" stroke="#3a923a" stroke-width="3.3" stroke-linecap="round" stroke-linejoin="round"/><path d="M1.9 6 L5.5 9.5 L11.8 2.4" fill="none" stroke="#66cc5a" stroke-width="1.8" stroke-linecap="round" stroke-linejoin="round"/></svg><svg class="a" style="left:436.3px;top:257.3px" width="12" height="12" viewBox="0 0 12 12"><path d="M1.8 1.8 L10.2 10.2 M10.2 1.8 L1.8 10.2" fill="none" stroke="#c80000" stroke-width="2.6" stroke-linecap="round"/></svg><svg class="a" style="left:435.5px;top:270.5px" width="14" height="12" viewBox="0 0 14 12"><path d="M1.9 6 L5.5 9.5 L11.8 2.4" fill="none" stroke="#3a923a" stroke-width="3.3" stroke-linecap="round" stroke-linejoin="round"/><path d="M1.9 6 L5.5 9.5 L11.8 2.4" fill="none" stroke="#66cc5a" stroke-width="1.8" stroke-linecap="round" stroke-linejoin="round"/></svg><svg class="a" style="left:436.3px;top:283.8px" width="12" height="12" viewBox="0 0 12 12"><path d="M1.8 1.8 L10.2 10.2 M10.2 1.8 L1.8 10.2" fill="none" stroke="#c80000" stroke-width="2.6" stroke-linecap="round"/></svg><svg class="a" style="left:435.5px;top:297.0px" width="14" height="12" viewBox="0 0 14 12"><path d="M1.9 6 L5.5 9.5 L11.8 2.4" fill="none" stroke="#3a923a" stroke-width="3.3" stroke-linecap="round" stroke-linejoin="round"/><path d="M1.9 6 L5.5 9.5 L11.8 2.4" fill="none" stroke="#66cc5a" stroke-width="1.8" stroke-linecap="round" stroke-linejoin="round"/></svg><svg class="a" style="left:435.5px;top:310.2px" width="14" height="12" viewBox="0 0 14 12"><path d="M1.9 6 L5.5 9.5 L11.8 2.4" fill="none" stroke="#3a923a" stroke-width="3.3" stroke-linecap="round" stroke-linejoin="round"/><path d="M1.9 6 L5.5 9.5 L11.8 2.4" fill="none" stroke="#66cc5a" stroke-width="1.8" stroke-linecap="round" stroke-linejoin="round"/></svg><svg class="a" style="left:435.5px;top:323.4px" width="14" height="12" viewBox="0 0 14 12"><path d="M1.9 6 L5.5 9.5 L11.8 2.4" fill="none" stroke="#3a923a" stroke-width="3.3" stroke-linecap="round" stroke-linejoin="round"/><path d="M1.9 6 L5.5 9.5 L11.8 2.4" fill="none" stroke="#66cc5a" stroke-width="1.8" stroke-linecap="round" stroke-linejoin="round"/></svg><svg class="a" style="left:436.3px;top:336.6px" width="12" height="12" viewBox="0 0 12 12"><path d="M1.8 1.8 L10.2 10.2 M10.2 1.8 L1.8 10.2" fill="none" stroke="#c80000" stroke-width="2.6" stroke-linecap="round"/></svg><svg class="a" style="left:435.5px;top:349.9px" width="14" height="12" viewBox="0 0 14 12"><path d="M1.9 6 L5.5 9.5 L11.8 2.4" fill="none" stroke="#3a923a" stroke-width="3.3" stroke-linecap="round" stroke-linejoin="round"/><path d="M1.9 6 L5.5 9.5 L11.8 2.4" fill="none" stroke="#66cc5a" stroke-width="1.8" stroke-linecap="round" stroke-linejoin="round"/></svg><svg class="a" style="left:435.5px;top:363.1px" width="14" height="12" viewBox="0 0 14 12"><path d="M1.9 6 L5.5 9.5 L11.8 2.4" fill="none" stroke="#3a923a" stroke-width="3.3" stroke-linecap="round" stroke-linejoin="round"/><path d="M1.9 6 L5.5 9.5 L11.8 2.4" fill="none" stroke="#66cc5a" stroke-width="1.8" stroke-linecap="round" stroke-linejoin="round"/></svg><svg class="a" style="left:436.3px;top:376.3px" width="12" height="12" viewBox="0 0 12 12"><path d="M1.8 1.8 L10.2 10.2 M10.2 1.8 L1.8 10.2" fill="none" stroke="#c80000" stroke-width="2.6" stroke-linecap="round"/></svg><svg class="a" style="left:435.5px;top:389.5px" width="14" height="12" viewBox="0 0 14 12"><path d="M1.9 6 L5.5 9.5 L11.8 2.4" fill="none" stroke="#3a923a" stroke-width="3.3" stroke-linecap="round" stroke-linejoin="round"/><path d="M1.9 6 L5.5 9.5 L11.8 2.4" fill="none" stroke="#66cc5a" stroke-width="1.8" stroke-linecap="round" stroke-linejoin="round"/></svg><svg class="a" style="left:435.5px;top:402.7px" width="14" height="12" viewBox="0 0 14 12"><path d="M1.9 6 L5.5 9.5 L11.8 2.4" fill="none" stroke="#3a923a" stroke-width="3.3" stroke-linecap="round" stroke-linejoin="round"/><path d="M1.9 6 L5.5 9.5 L11.8 2.4" fill="none" stroke="#66cc5a" stroke-width="1.8" stroke-linecap="round" stroke-linejoin="round"/></svg><svg class="a" style="left:435.5px;top:415.9px" width="14" height="12" viewBox="0 0 14 12"><path d="M1.9 6 L5.5 9.5 L11.8 2.4" fill="none" stroke="#3a923a" stroke-width="3.3" stroke-linecap="round" stroke-linejoin="round"/><path d="M1.9 6 L5.5 9.5 L11.8 2.4" fill="none" stroke="#66cc5a" stroke-width="1.8" stroke-linecap="round" stroke-linejoin="round"/></svg><svg class="a" style="left:436.3px;top:429.2px" width="12" height="12" viewBox="0 0 12 12"><path d="M1.8 1.8 L10.2 10.2 M10.2 1.8 L1.8 10.2" fill="none" stroke="#c80000" stroke-width="2.6" stroke-linecap="round"/></svg><svg class="a" style="left:435.5px;top:442.4px" width="14" height="12" viewBox="0 0 14 12"><path d="M1.9 6 L5.5 9.5 L11.8 2.4" fill="none" stroke="#3a923a" stroke-width="3.3" stroke-linecap="round" stroke-linejoin="round"/><path d="M1.9 6 L5.5 9.5 L11.8 2.4" fill="none" stroke="#66cc5a" stroke-width="1.8" stroke-linecap="round" stroke-linejoin="round"/></svg><svg class="a" style="left:436.3px;top:455.6px" width="12" height="12" viewBox="0 0 12 12"><path d="M1.8 1.8 L10.2 10.2 M10.2 1.8 L1.8 10.2" fill="none" stroke="#c80000" stroke-width="2.6" stroke-linecap="round"/></svg><svg class="a" style="left:436.3px;top:468.8px" width="12" height="12" viewBox="0 0 12 12"><path d="M1.8 1.8 L10.2 10.2 M10.2 1.8 L1.8 10.2" fill="none" stroke="#c80000" stroke-width="2.6" stroke-linecap="round"/></svg><svg class="a" style="left:436.3px;top:482.1px" width="12" height="12" viewBox="0 0 12 12"><path d="M1.8 1.8 L10.2 10.2 M10.2 1.8 L1.8 10.2" fill="none" stroke="#c80000" stroke-width="2.6" stroke-linecap="round"/></svg><svg class="a" style="left:436.3px;top:495.3px" width="12" height="12" viewBox="0 0 12 12"><path d="M1.8 1.8 L10.2 10.2 M10.2 1.8 L1.8 10.2" fill="none" stroke="#c80000" stroke-width="2.6" stroke-linecap="round"/></svg><svg class="a" style="left:436.3px;top:508.5px" width="12" height="12" viewBox="0 0 12 12"><path d="M1.8 1.8 L10.2 10.2 M10.2 1.8 L1.8 10.2" fill="none" stroke="#c80000" stroke-width="2.6" stroke-linecap="round"/></svg><svg class="a" style="left:436.3px;top:521.7px" width="12" height="12" viewBox="0 0 12 12"><path d="M1.8 1.8 L10.2 10.2 M10.2 1.8 L1.8 10.2" fill="none" stroke="#c80000" stroke-width="2.6" stroke-linecap="round"/></svg><svg class="a" style="left:436.3px;top:534.9px" width="12" height="12" viewBox="0 0 12 12"><path d="M1.8 1.8 L10.2 10.2 M10.2 1.8 L1.8 10.2" fill="none" stroke="#c80000" stroke-width="2.6" stroke-linecap="round"/></svg><svg class="a" style="left:436.3px;top:548.2px" width="12" height="12" viewBox="0 0 12 12"><path d="M1.8 1.8 L10.2 10.2 M10.2 1.8 L1.8 10.2" fill="none" stroke="#c80000" stroke-width="2.6" stroke-linecap="round"/></svg><svg class="a" style="left:436.3px;top:561.4px" width="12" height="12" viewBox="0 0 12 12"><path d="M1.8 1.8 L10.2 10.2 M10.2 1.8 L1.8 10.2" fill="none" stroke="#c80000" stroke-width="2.6" stroke-linecap="round"/></svg><svg class="a" style="left:436.3px;top:574.6px" width="12" height="12" viewBox="0 0 12 12"><path d="M1.8 1.8 L10.2 10.2 M10.2 1.8 L1.8 10.2" fill="none" stroke="#c80000" stroke-width="2.6" stroke-linecap="round"/></svg><svg class="a" style="left:436.3px;top:587.8px" width="12" height="12" viewBox="0 0 12 12"><path d="M1.8 1.8 L10.2 10.2 M10.2 1.8 L1.8 10.2" fill="none" stroke="#c80000" stroke-width="2.6" stroke-linecap="round"/></svg><svg class="a" style="left:436.3px;top:601.0px" width="12" height="12" viewBox="0 0 12 12"><path d="M1.8 1.8 L10.2 10.2 M10.2 1.8 L1.8 10.2" fill="none" stroke="#c80000" stroke-width="2.6" stroke-linecap="round"/></svg><svg class="a" style="left:436.3px;top:614.2px" width="12" height="12" viewBox="0 0 12 12"><path d="M1.8 1.8 L10.2 10.2 M10.2 1.8 L1.8 10.2" fill="none" stroke="#c80000" stroke-width="2.6" stroke-linecap="round"/></svg><svg class="a" style="left:436.3px;top:627.5px" width="12" height="12" viewBox="0 0 12 12"><path d="M1.8 1.8 L10.2 10.2 M10.2 1.8 L1.8 10.2" fill="none" stroke="#c80000" stroke-width="2.6" stroke-linecap="round"/></svg><svg class="a" style="left:436.3px;top:640.7px" width="12" height="12" viewBox="0 0 12 12"><path d="M1.8 1.8 L10.2 10.2 M10.2 1.8 L1.8 10.2" fill="none" stroke="#c80000" stroke-width="2.6" stroke-linecap="round"/></svg><svg class="a" style="left:436.3px;top:653.9px" width="12" height="12" viewBox="0 0 12 12"><path d="M1.8 1.8 L10.2 10.2 M10.2 1.8 L1.8 10.2" fill="none" stroke="#c80000" stroke-width="2.6" stroke-linecap="round"/></svg><svg class="a" style="left:436.3px;top:667.1px" width="12" height="12" viewBox="0 0 12 12"><path d="M1.8 1.8 L10.2 10.2 M10.2 1.8 L1.8 10.2" fill="none" stroke="#c80000" stroke-width="2.6" stroke-linecap="round"/></svg><svg class="a" style="left:436.3px;top:680.4px" width="12" height="12" viewBox="0 0 12 12"><path d="M1.8 1.8 L10.2 10.2 M10.2 1.8 L1.8 10.2" fill="none" stroke="#c80000" stroke-width="2.6" stroke-linecap="round"/></svg><svg class="a" style="left:435.5px;top:693.6px" width="14" height="12" viewBox="0 0 14 12"><path d="M1.9 6 L5.5 9.5 L11.8 2.4" fill="none" stroke="#3a923a" stroke-width="3.3" stroke-linecap="round" stroke-linejoin="round"/><path d="M1.9 6 L5.5 9.5 L11.8 2.4" fill="none" stroke="#66cc5a" stroke-width="1.8" stroke-linecap="round" stroke-linejoin="round"/></svg><svg class="a" style="left:436.3px;top:706.8px" width="12" height="12" viewBox="0 0 12 12"><path d="M1.8 1.8 L10.2 10.2 M10.2 1.8 L1.8 10.2" fill="none" stroke="#c80000" stroke-width="2.6" stroke-linecap="round"/></svg>
<div class="a" style="left:426px;top:2px;width:250px;height:20px;background:linear-gradient(#e2eaf4,#c3d3e6 45%,#98b3d2);border-radius:2px 2px 0 0"></div>
<div class="a" style="left:429px;top:6px;width:12px;height:10px;background:#fff;border:1px solid #7f8fa5;border-radius:1px;box-shadow:0 1px 0 #5d6f88"></div>
<div class="a" style="left:430.5px;top:5.5px;font:bold 7px 'Liberation Sans',sans-serif;color:#222">A</div>
<div class="a" style="left:436px;top:9px;width:4px;height:1px;background:#b0b8c4"></div><div class="a" style="left:436px;top:11px;width:4px;height:1px;background:#b0b8c4"></div>
<div class="a" style="left:445.00px;top:6.11px;font-family:'Liberation Sans',sans-serif;font-size:10.50px;line-height:10.50px;color:#000;white-space:pre;transform:scaleX(0.9110);transform-origin:0 0;">*OLSGInvoice_twoLines_inItemDescription (TXT)</div>
<svg class="a" style="left:662px;top:6px" width="10" height="10" viewBox="0 0 10 10"><path d="M1.5 1.5L8.5 8.5M8.5 1.5L1.5 8.5" stroke="#6f7f93" stroke-width="3" stroke-linecap="round"/><path d="M1.5 1.5L8.5 8.5M8.5 1.5L1.5 8.5" stroke="#fff" stroke-width="1.6" stroke-linecap="round"/></svg>
<div class="a" style="left:426px;top:21px;width:628px;height:1px;background:#9fb7d4"></div>
<div class="a" style="left:676px;top:1px;width:1px;height:20px;background:#bcbcbc"></div><div class="a" style="left:676px;top:19.5px;width:378px;height:1.5px;background:#c4c4c4"></div>
<div class="a" style="left:1025.7px;top:5px;width:8.5px;height:3px;border:1px solid #7a7a7a;border-radius:1px;background:#fff"></div><div class="a" style="left:1040.5px;top:5px;width:9px;height:8px;border:1px solid #6e6e6e;border-top-width:2px;background:#fff"></div>
<div class="a" style="left:432.00px;top:29.12px;font-family:'Liberation Sans',sans-serif;font-size:13.80px;line-height:13.80px;color:#154a7e;white-space:pre;transform:scaleX(1.0649);transform-origin:0 0;">Text viewer</div>
<div class="a" style="left:662.60px;top:33.11px;font-family:'Liberation Sans',sans-serif;font-size:10.50px;line-height:10.50px;color:#000;white-space:pre;transform:scaleX(0.9043);transform-origin:0 0;">Font</div>
<div class="a" style="left:686px;top:29px;width:125px;height:18px;background:#fff;border:1px solid #b5b5b5"></div>
<div class="a" style="left:691.60px;top:33.11px;font-family:'Liberation Sans',sans-serif;font-size:10.50px;line-height:10.50px;color:#000;white-space:pre;transform:scaleX(0.9254);transform-origin:0 0;">Courier New</div>
<svg class="a" style="left:797px;top:35px" width="9" height="6" viewBox="0 0 9 6"><path d="M1 1L4.5 4.5L8 1" fill="none" stroke="#333" stroke-width="1.4"/></svg>
<div class="a" style="left:812px;top:30px;width:2px;height:15px;background:#b8b8b8;border-right:1px solid #fff"></div>
<div class="a" style="left:822.50px;top:31.84px;font-family:'Liberation Sans',sans-serif;font-size:12.00px;line-height:12.00px;color:#333;white-space:pre;font-weight:bold;font-style:italic;">#</div>
<svg class="a" style="left:839px;top:30px" width="15" height="15" viewBox="0 0 15 15"><path d="M8 1.5 L13.5 1.5 L13.5 7 L6.5 14 L1 8.5 Z" fill="#3cc021" stroke="#2a9a14" stroke-width="0.8" stroke-linejoin="round"/><circle cx="10.8" cy="4.2" r="1.3" fill="#fff"/></svg>
<svg class="a" style="left:857px;top:30px" width="16" height="16" viewBox="0 0 16 16"><rect x="2" y="2.5" width="12" height="12" fill="#dbe9f7" stroke="#6a9ad8" stroke-width="1"/><path d="M5 1 L1.5 5 L3.5 5 L3.5 10 L6.5 10 L6.5 5 L8.5 5 Z" fill="#4a9a3a"/><path d="M5 14.5 L13.5 6 L15 7.5 L6.5 16 Z" fill="#f0c850" stroke="#c08a30" stroke-width="0.7"/></svg>
<svg class="a" style="left:877px;top:30px" width="14" height="16" viewBox="0 0 14 16"><path d="M3 7 V5 a4 4 0 0 1 8 0 V7" fill="none" stroke="#9a9a9a" stroke-width="2"/><rect x="1" y="7" width="12" height="8.5" rx="1" fill="#f2c656" stroke="#d09a30" stroke-width="0.8"/><rect x="6.3" y="9.5" width="1.4" height="3" fill="#a8701c"/></svg>
<div class="a" style="left:895px;top:30px;width:2px;height:15px;background:#8e8e8e;border-right:1px solid #fff"></div>
<div class="a" style="left:900.00px;top:33.11px;font-family:'Liberation Sans',sans-serif;font-size:10.50px;line-height:10.50px;color:#000;white-space:pre;transform:scaleX(0.9497);transform-origin:0 0;">Zoom(%)</div>
<div class="a" style="left:946px;top:29px;width:43px;height:18px;background:#fff;border:1px solid #b5b5b5"></div>
<div class="a" style="left:951.00px;top:33.11px;font-family:'Liberation Sans',sans-serif;font-size:10.50px;line-height:10.50px;color:#000;white-space:pre;transform:scaleX(0.7991);transform-origin:0 0;">100</div>
<div class="a" style="left:976px;top:30px;width:12px;height:8px;background:linear-gradient(#f4f4f4,#e2e2e2);border:1px solid #c6c6c6"></div>
<div class="a" style="left:976px;top:38px;width:12px;height:8px;background:linear-gradient(#f4f4f4,#e2e2e2);border:1px solid #c6c6c6"></div>
<svg class="a" style="left:978px;top:31px" width="8" height="14" viewBox="0 0 8 14"><path d="M1 5L4 2L7 5Z M1 9L4 12L7 9Z" fill="#111"/></svg>
<svg class="a" style="left:989.4px;top:30.9px" width="16" height="16" viewBox="0 0 16 16"><path d="M2 13 L6.3 9" stroke="#7a7a7a" stroke-width="2.2" stroke-linecap="round"/><circle cx="10.5" cy="5.5" r="4.3" fill="#f4f8ff" stroke="#4a6ee0" stroke-width="1.3"/><path d="M8 5.5h5M10.5 3v5" stroke="#4a6ee0" stroke-width="1.4"/></svg>
<svg class="a" style="left:1009.4px;top:30.5px" width="16" height="16" viewBox="0 0 16 16"><path d="M2 13 L6.3 9" stroke="#7a7a7a" stroke-width="2.2" stroke-linecap="round"/><circle cx="10.5" cy="5.5" r="4.3" fill="#f4f8ff" stroke="#4a6ee0" stroke-width="1.3"/><path d="M8 5.5h5" stroke="#4a6ee0" stroke-width="1.6"/></svg>
<svg class="a" style="left:1030px;top:31px" width="14" height="14" viewBox="0 0 14 14"><defs><radialGradient id="hg1" cx="40%" cy="35%" r="70%"><stop offset="0" stop-color="#a9c6ee"/><stop offset="1" stop-color="#3f6fb8"/></radialGradient></defs><circle cx="7" cy="7" r="6.3" fill="url(#hg1)" stroke="#8fb0dd" stroke-width="0.8"/><text x="7" y="10.5" text-anchor="middle" font-family="Liberation Sans" font-weight="bold" font-size="9" fill="#fff">?</text></svg>
<div class="a" style="left:1016px;top:54px;width:14px;height:689px;background:#f0f0f0"></div>
<div class="a" style="left:1016.5px;top:133px;width:12px;height:559px;background:#cdcdcd"></div>
<svg class="a" style="left:1018px;top:59px" width="9" height="6" viewBox="0 0 9 6"><path d="M1 5L4.5 1.5L8 5" fill="none" stroke="#555" stroke-width="1.5"/></svg>
<svg class="a" style="left:1018px;top:719px" width="9" height="6" viewBox="0 0 9 6"><path d="M1 1L4.5 4.5L8 1" fill="none" stroke="#555" stroke-width="1.5"/></svg>
<div class="a" style="left:454px;top:730px;width:576px;height:13px;background:#f0f0f0"></div>
<div class="a" style="left:468px;top:730.5px;width:443px;height:12px;background:#cdcdcd"></div>
<svg class="a" style="left:458px;top:732px" width="6" height="9" viewBox="0 0 6 9"><path d="M5 1L1.5 4.5L5 8" fill="none" stroke="#555" stroke-width="1.5"/></svg>
<svg class="a" style="left:1006px;top:732px" width="6" height="9" viewBox="0 0 6 9"><path d="M1 1L4.5 4.5L1 8" fill="none" stroke="#555" stroke-width="1.5"/></svg>
<div class="a" style="left:1056px;top:0;width:436px;height:751px;border:1px solid #c8c8c8;border-radius:3px 3px 0 0;background:#f0f0f0"></div>
<div class="a tb" style="left:1057px;top:20px;width:434px;height:28px;border-top:1px solid #c4c4c4"></div>
<div class="a" style="left:1057px;top:48px;width:434px;height:702px;background:#fff"></div>
<div class="a" style="left:1057px;top:1px;width:89px;height:21px;background:linear-gradient(#ffffff,#f3f3f3);border:1px solid #c4c4c4;border-bottom:none;border-radius:2px 2px 0 0"></div>
<svg class="a" style="left:1060px;top:4px" width="14" height="14" viewBox="0 0 14 14"><path d="M1 4.2 L4.2 1 L8.2 1.2 L13 6 L6 13 L1.2 8.2 Z" fill="#fafafa" stroke="#b9b9b9" stroke-width="1"/><path d="M5 5.5 L6.3 4.2 L10.5 8.4 L8.4 10.5 L4.2 6.3Z" fill="#7cc7f5"/><circle cx="3.9" cy="3.9" r="0.9" fill="#c8c8c8"/></svg>
<div class="a" style="left:1076.80px;top:6.31px;font-family:'Liberation Sans',sans-serif;font-size:10.50px;line-height:10.50px;color:#000;white-space:pre;transform:scaleX(0.8981);transform-origin:0 0;">Step Properties</div>
<div class="a" style="left:1465px;top:5px;width:8px;height:3.5px;border:1px solid #6e6e6e;background:#fff"></div><div class="a" style="left:1479px;top:5px;width:9px;height:8.5px;border:1px solid #6e6e6e;border-top-width:2px;background:#fff"></div>
<div class="a" style="left:1065.00px;top:28.35px;font-family:'Liberation Sans',sans-serif;font-size:14.00px;line-height:14.00px;color:#154a7e;white-space:pre;transform:scaleX(1.0614);transform-origin:0 0;">Condition step</div>
<svg class="a" style="left:1468px;top:31px" width="14" height="14" viewBox="0 0 14 14"><defs><radialGradient id="hg2" cx="40%" cy="35%" r="70%"><stop offset="0" stop-color="#a9c6ee"/><stop offset="1" stop-color="#3f6fb8"/></radialGradient></defs><circle cx="7" cy="7" r="6.3" fill="url(#hg2)" stroke="#8fb0dd" stroke-width="0.8"/><text x="7" y="10.5" text-anchor="middle" font-family="Liberation Sans" font-weight="bold" font-size="9" fill="#fff">?</text></svg>
<div class="a" style="left:1068px;top:53px;width:415px;height:18px;border-radius:3px 3px 0 0;border-top:1px solid #c9d7e8;border-left:1px solid #d8e2ee;border-right:1px solid #d8e2ee;background:linear-gradient(#dfe8f2,#f3f6fa 70%,#ffffff)"></div><svg class="a" style="left:1075px;top:58.5px" width="6" height="8" viewBox="0 0 6 8"><path d="M0.3 0.6 V7 L4.5 3.8 Z" fill="#1d3f6e"/></svg><div class="a" style="left:1086.00px;top:57.07px;font-family:'Liberation Sans',sans-serif;font-size:9.60px;line-height:9.60px;color:#1f4878;white-space:pre;font-weight:bold;transform:scaleX(0.9847);transform-origin:0 0;">Description</div>
<div class="a" style="left:1068px;top:77px;width:415px;height:18px;border-radius:3px 3px 0 0;border-top:1px solid #c9d7e8;border-left:1px solid #d8e2ee;border-right:1px solid #d8e2ee;background:linear-gradient(#dfe8f2,#f3f6fa 70%,#ffffff)"></div><svg class="a" style="left:1075px;top:82.5px" width="6" height="8" viewBox="0 0 6 8"><path d="M0.3 0.6 V7 L4.5 3.8 Z" fill="#1d3f6e"/></svg><div class="a" style="left:1086.00px;top:81.07px;font-family:'Liberation Sans',sans-serif;font-size:9.60px;line-height:9.60px;color:#1f4878;white-space:pre;font-weight:bold;transform:scaleX(1.0272);transform-origin:0 0;">Rule tree</div>
<div class="a" style="left:1068px;top:101px;width:415px;height:18px;border-radius:3px 3px 0 0;border-top:1px solid #c9d7e8;border-left:1px solid #d8e2ee;border-right:1px solid #d8e2ee;background:linear-gradient(#dfe8f2,#f3f6fa 70%,#ffffff)"></div><svg class="a" style="left:1073.5px;top:107.5px" width="8" height="6" viewBox="0 0 8 6"><path d="M0.5 0.8 H7 L3.75 4.8 Z" fill="#1d3f6e"/></svg><div class="a" style="left:1086.00px;top:105.07px;font-family:'Liberation Sans',sans-serif;font-size:9.60px;line-height:9.60px;color:#1f4878;white-space:pre;font-weight:bold;transform:scaleX(0.9602);transform-origin:0 0;">Condition</div>
<div class="a" style="left:1081.50px;top:128.51px;font-family:'Liberation Sans',sans-serif;font-size:10.50px;line-height:10.50px;color:#000;white-space:pre;transform:scaleX(0.9630);transform-origin:0 0;">Condition list:</div>
<div class="a" style="left:1150.7px;top:124.7px;width:278.3px;height:18.7px;background:linear-gradient(#f2f2f2,#e5e5e5);border:1px solid #acacac"></div><div class="a" style="left:1154.70px;top:128.96px;font-family:'Liberation Sans',sans-serif;font-size:10.50px;line-height:10.50px;color:#000;white-space:pre;transform:scaleX(0.9518);transform-origin:0 0;">Condition name</div><svg class="a" style="left:1415.0px;top:131.55px" width="9" height="6" viewBox="0 0 9 6"><path d="M1 1L4.5 4.5L8 1" fill="none" stroke="#404040" stroke-width="1.6"/></svg>
<svg class="a" style="left:1433px;top:126px" width="15" height="15" viewBox="0 0 15 15"><rect x="0.8" y="0.8" width="12" height="11" fill="#eaf4fc" stroke="#3a90d0" stroke-width="1.2"/><path d="M1 4H13 M1 7H13 M1 10H13 M4.5 1V12 M8.5 1V12" stroke="#5aa8e0" stroke-width="0.8"/><rect x="1" y="1" width="12" height="2" fill="#f0b840"/><circle cx="11.3" cy="11.3" r="3.3" fill="#52b82a" stroke="#2e8a14" stroke-width="0.6"/><path d="M9.5 11.3H13.1 M11.3 9.5V13.1" stroke="#fff" stroke-width="1.2"/></svg>
<svg class="a" style="left:1452px;top:126px" width="15" height="15" viewBox="0 0 15 15"><rect x="0.8" y="0.8" width="12" height="11" fill="#f8f8f8" stroke="#b0b0b0" stroke-width="1"/><path d="M1 4H13 M4.5 1V12" stroke="#d0d0d0" stroke-width="0.8" stroke-dasharray="1 1"/><circle cx="11.3" cy="11.3" r="3.3" fill="#b8b8b8" stroke="#9a9a9a" stroke-width="0.6"/><path d="M9.5 11.3H13.1" stroke="#fff" stroke-width="1.2"/></svg>
<div class="a" style="left:1081.5px;top:154.5px;width:388px;height:106px;border:1px solid #dcdcdc;border-radius:2px"></div><div class="a" style="left:1086.5px;top:153.5px;width:60px;height:4px;background:#fff"></div><div class="a" style="left:1089.50px;top:149.01px;font-family:'Liberation Sans',sans-serif;font-size:10.50px;line-height:10.50px;color:#000;white-space:pre;transform:scaleX(0.9158);transform-origin:0 0;">Left operand</div>
<div class="a" style="left:1092.70px;top:168.71px;font-family:'Liberation Sans',sans-serif;font-size:10.50px;line-height:10.50px;color:#000;white-space:pre;transform:scaleX(0.8671);transform-origin:0 0;">Based on:</div>
<div class="a" style="left:1161px;top:164.5px;width:297.8px;height:18.2px;background:linear-gradient(#f2f2f2,#e5e5e5);border:1px solid #acacac"></div><div class="a" style="left:1165.00px;top:168.51px;font-family:'Liberation Sans',sans-serif;font-size:10.50px;line-height:10.50px;color:#000;white-space:pre;transform:scaleX(0.9316);transform-origin:0 0;">Position</div><svg class="a" style="left:1444.8px;top:171.1px" width="9" height="6" viewBox="0 0 9 6"><path d="M1 1L4.5 4.5L8 1" fill="none" stroke="#404040" stroke-width="1.6"/></svg>
<div class="a" style="left:1092.70px;top:191.11px;font-family:'Liberation Sans',sans-serif;font-size:10.50px;line-height:10.50px;color:#000;white-space:pre;transform:scaleX(0.8712);transform-origin:0 0;">Left:</div>
<div class="a" style="left:1161px;top:187.5px;width:110.2px;height:18.2px;background:#fff;border:1px solid #acacac"></div><div class="a" style="left:1166.00px;top:191.51px;font-family:'Liberation Sans',sans-serif;font-size:10.50px;line-height:10.50px;color:#000;white-space:pre;transform:scaleX(0.9418);transform-origin:0 0;">78</div><div class="a" style="left:1258.2px;top:189.0px;width:11px;height:7.6px;background:linear-gradient(#f4f4f4,#e0e0e0);border:1px solid #c2c2c2"></div><div class="a" style="left:1258.2px;top:196.6px;width:11px;height:7.6px;background:linear-gradient(#f4f4f4,#e0e0e0);border:1px solid #c2c2c2"></div><svg class="a" style="left:1259.7px;top:189.5px" width="8" height="14.2" viewBox="0 0 8 14"><path d="M1.2 5L4 2L6.8 5Z M1.2 9L4 12L6.8 9Z" fill="#111"/></svg>
<div class="a" style="left:1279.30px;top:191.61px;font-family:'Liberation Sans',sans-serif;font-size:10.50px;line-height:10.50px;color:#000;white-space:pre;transform:scaleX(0.9406);transform-origin:0 0;">Right:</div>
<div class="a" style="left:1349px;top:187.5px;width:87.4px;height:18.2px;background:#fff;border:1px solid #acacac"></div><div class="a" style="left:1354.00px;top:191.51px;font-family:'Liberation Sans',sans-serif;font-size:10.50px;line-height:10.50px;color:#000;white-space:pre;transform:scaleX(0.8562);transform-origin:0 0;">78</div><div class="a" style="left:1423.4px;top:189.0px;width:11px;height:7.6px;background:linear-gradient(#f4f4f4,#e0e0e0);border:1px solid #c2c2c2"></div><div class="a" style="left:1423.4px;top:196.6px;width:11px;height:7.6px;background:linear-gradient(#f4f4f4,#e0e0e0);border:1px solid #c2c2c2"></div><svg class="a" style="left:1424.9px;top:189.5px" width="8" height="14.2" viewBox="0 0 8 14"><path d="M1.2 5L4 2L6.8 5Z M1.2 9L4 12L6.8 9Z" fill="#111"/></svg>
<div class="a" style="left:1092.70px;top:215.41px;font-family:'Liberation Sans',sans-serif;font-size:10.50px;line-height:10.50px;color:#000;white-space:pre;transform:scaleX(0.9678);transform-origin:0 0;">Top offset:</div>
<div class="a" style="left:1161px;top:211.6px;width:110.2px;height:18.3px;background:#fff;border:1px solid #acacac"></div><div class="a" style="left:1166.00px;top:215.66px;font-family:'Liberation Sans',sans-serif;font-size:10.50px;line-height:10.50px;color:#000;white-space:pre;transform:scaleX(0.8562);transform-origin:0 0;">0</div><div class="a" style="left:1258.2px;top:213.1px;width:11px;height:7.65px;background:linear-gradient(#f4f4f4,#e0e0e0);border:1px solid #c2c2c2"></div><div class="a" style="left:1258.2px;top:220.75px;width:11px;height:7.65px;background:linear-gradient(#f4f4f4,#e0e0e0);border:1px solid #c2c2c2"></div><svg class="a" style="left:1259.7px;top:213.6px" width="8" height="14.3" viewBox="0 0 8 14"><path d="M1.2 5L4 2L6.8 5Z M1.2 9L4 12L6.8 9Z" fill="#111"/></svg>
<div class="a" style="left:1279.30px;top:215.71px;font-family:'Liberation Sans',sans-serif;font-size:10.50px;line-height:10.50px;color:#000;white-space:pre;transform:scaleX(0.9679);transform-origin:0 0;">Height:</div>
<div class="a" style="left:1349px;top:211.6px;width:87.4px;height:18.3px;background:#fff;border:1px solid #acacac"></div><div class="a" style="left:1354.00px;top:215.66px;font-family:'Liberation Sans',sans-serif;font-size:10.50px;line-height:10.50px;color:#000;white-space:pre;transform:scaleX(0.6850);transform-origin:0 0;">1</div><div class="a" style="left:1423.4px;top:213.1px;width:11px;height:7.65px;background:linear-gradient(#f4f4f4,#e0e0e0);border:1px solid #c2c2c2"></div><div class="a" style="left:1423.4px;top:220.75px;width:11px;height:7.65px;background:linear-gradient(#f4f4f4,#e0e0e0);border:1px solid #c2c2c2"></div><svg class="a" style="left:1424.9px;top:213.6px" width="8" height="14.3" viewBox="0 0 8 14"><path d="M1.2 5L4 2L6.8 5Z M1.2 9L4 12L6.8 9Z" fill="#111"/></svg>
<div class="a" style="left:1440px;top:212px;width:18px;height:18px;background:#f0f0f0;border:1px solid #dadada"></div><div class="a" style="left:1443px;top:215px;width:12px;height:12px;border:1px dotted #bdbdbd;background:#e6e6e6"></div>
<div class="a" style="left:1092.70px;top:239.71px;font-family:'Liberation Sans',sans-serif;font-size:10.50px;line-height:10.50px;color:#000;white-space:pre;transform:scaleX(0.9482);transform-origin:0 0;">Trim:</div>
<div class="a" style="left:1161px;top:235.6px;width:297.8px;height:18.7px;background:linear-gradient(#f2f2f2,#e5e5e5);border:1px solid #acacac"></div><div class="a" style="left:1165.00px;top:239.86px;font-family:'Liberation Sans',sans-serif;font-size:10.50px;line-height:10.50px;color:#000;white-space:pre;transform:scaleX(1.0648);transform-origin:0 0;">Both</div><svg class="a" style="left:1444.8px;top:242.45px" width="9" height="6" viewBox="0 0 9 6"><path d="M1 1L4.5 4.5L8 1" fill="none" stroke="#404040" stroke-width="1.6"/></svg>
<div class="a" style="left:1081.60px;top:269.71px;font-family:'Liberation Sans',sans-serif;font-size:10.50px;line-height:10.50px;color:#000;white-space:pre;transform:scaleX(0.9244);transform-origin:0 0;">Operator:</div>
<div class="a" style="left:1150.9px;top:265.5px;width:120.1px;height:18.2px;background:linear-gradient(#f2f2f2,#e5e5e5);border:1px solid #acacac"></div><div class="a" style="left:1154.90px;top:269.51px;font-family:'Liberation Sans',sans-serif;font-size:10.50px;line-height:10.50px;color:#000;white-space:pre;transform:scaleX(0.9333);transform-origin:0 0;">contains</div><svg class="a" style="left:1257.0px;top:272.1px" width="9" height="6" viewBox="0 0 9 6"><path d="M1 1L4.5 4.5L8 1" fill="none" stroke="#404040" stroke-width="1.6"/></svg>
<div class="a" style="left:1349px;top:267px;width:11px;height:11px;background:#fff;border:1px solid #8e8f8f;border-radius:1px"></div>
<div class="a" style="left:1362.30px;top:267.91px;font-family:'Liberation Sans',sans-serif;font-size:10.50px;line-height:10.50px;color:#000;white-space:pre;transform:scaleX(0.9676);transform-origin:0 0;">Invert condition</div>
<div class="a" style="left:1081.5px;top:294.8px;width:388px;height:59.5px;border:1px solid #dcdcdc;border-radius:2px"></div><div class="a" style="left:1086.5px;top:293.8px;width:67.8px;height:4px;background:#fff"></div><div class="a" style="left:1089.50px;top:289.31px;font-family:'Liberation Sans',sans-serif;font-size:10.50px;line-height:10.50px;color:#000;white-space:pre;transform:scaleX(0.9369);transform-origin:0 0;">Right operand</div>
<div class="a" style="left:1092.10px;top:309.11px;font-family:'Liberation Sans',sans-serif;font-size:10.50px;line-height:10.50px;color:#000;white-space:pre;transform:scaleX(0.8671);transform-origin:0 0;">Based on:</div>
<div class="a" style="left:1161.2px;top:305.3px;width:297.6px;height:18.1px;background:linear-gradient(#f2f2f2,#e5e5e5);border:1px solid #acacac"></div><div class="a" style="left:1165.20px;top:309.26px;font-family:'Liberation Sans',sans-serif;font-size:10.50px;line-height:10.50px;color:#000;white-space:pre;">Value</div><svg class="a" style="left:1444.8000000000002px;top:311.85px" width="9" height="6" viewBox="0 0 9 6"><path d="M1 1L4.5 4.5L8 1" fill="none" stroke="#404040" stroke-width="1.6"/></svg>
<div class="a" style="left:1092.10px;top:332.31px;font-family:'Liberation Sans',sans-serif;font-size:10.50px;line-height:10.50px;color:#000;white-space:pre;transform:scaleX(0.8968);transform-origin:0 0;">Value:</div>
<div class="a" style="left:1161.2px;top:329.3px;width:275.3px;height:16.5px;background:#fff;border:1px solid #acacac"></div>
<div class="a" style="left:1166.00px;top:332.61px;font-family:'Liberation Sans',sans-serif;font-size:10.50px;line-height:10.50px;color:#000;white-space:pre;">,</div>
<div class="a" style="left:1440px;top:329px;width:18px;height:17px;background:#f0f0f0;border:1px solid #dadada"></div><div class="a" style="left:1443px;top:332px;width:12px;height:11px;border:1px dotted #bdbdbd;background:#e6e6e6"></div>
<div class="a" style="left:1202px;top:753px;width:2px;height:18px;border-left:1px dotted #a0a0a0;border-right:1px dotted #d0d0d0"></div>
<div class="a" style="left:1441px;top:753px;width:52px;height:21px;border:1px solid #d8d8d8;border-right:none;border-radius:2px 0 0 0"></div>
<div class="a" style="left:1446px;top:756px;width:2px;height:15px;border-left:1px dotted #a0a0a0"></div>
<svg class="a" style="left:1456px;top:759px" width="9" height="9" viewBox="0 0 9 9"><rect x="3" y="0.5" width="5.5" height="4.5" fill="#fff" stroke="#444" stroke-width="1"/><rect x="0.5" y="3.5" width="5.5" height="5" fill="#fff" stroke="#444" stroke-width="1"/><rect x="0.5" y="3.5" width="5.5" height="1.5" fill="#444"/><rect x="3" y="0.5" width="5.5" height="1.5" fill="#444"/></svg>
<div class="a" style="left:1477.50px;top:757.50px;font-family:'Liberation Sans',sans-serif;font-size:13.00px;line-height:13.00px;color:#1f4fa8;white-space:pre;font-weight:bold;font-family:'Liberation Serif',serif;">i</div>
<svg class="a" style="left:0;top:0" width="700" height="300" viewBox="0 0 700 300"><path d="M358 220.5 L314.5 265" stroke="#5b9ad5" stroke-width="2.6"/><path d="M310.8 268.8 L313 260.5 L319 266.5 Z" fill="#5b9ad5" stroke="#5b9ad5" stroke-width="1.2" stroke-linejoin="round"/><rect x="354" y="102" width="282" height="123.5" rx="15.5" ry="15.5" fill="#5b9ad5"/></svg>
<div class="a" style="left:374.10px;top:118.92px;font-family:'Liberation Sans',sans-serif;font-size:16.40px;line-height:16.40px;color:#ffffff;white-space:pre;font-style:italic;transform:scaleX(1.0639);transform-origin:0 0;-webkit-text-stroke:0.15px #5b9ad5;">A first condition is configured to</div>
<div class="a" style="left:377.35px;top:143.52px;font-family:'Liberation Sans',sans-serif;font-size:16.40px;line-height:16.40px;color:#ffffff;white-space:pre;font-style:italic;transform:scaleX(1.0665);transform-origin:0 0;-webkit-text-stroke:0.15px #5b9ad5;">indicate that only the lines that</div>
<div class="a" style="left:370.70px;top:167.72px;font-family:'Liberation Sans',sans-serif;font-size:16.40px;line-height:16.40px;color:#ffffff;white-space:pre;font-style:italic;transform:scaleX(1.0610);transform-origin:0 0;-webkit-text-stroke:0.15px #5b9ad5;">include an amount of money are</div>
<div class="a" style="left:459.40px;top:191.92px;font-family:'Liberation Sans',sans-serif;font-size:16.40px;line-height:16.40px;color:#ffffff;white-space:pre;font-style:italic;transform:scaleX(1.0555);transform-origin:0 0;-webkit-text-stroke:0.15px #5b9ad5;">extracted</div>
</body></html>
